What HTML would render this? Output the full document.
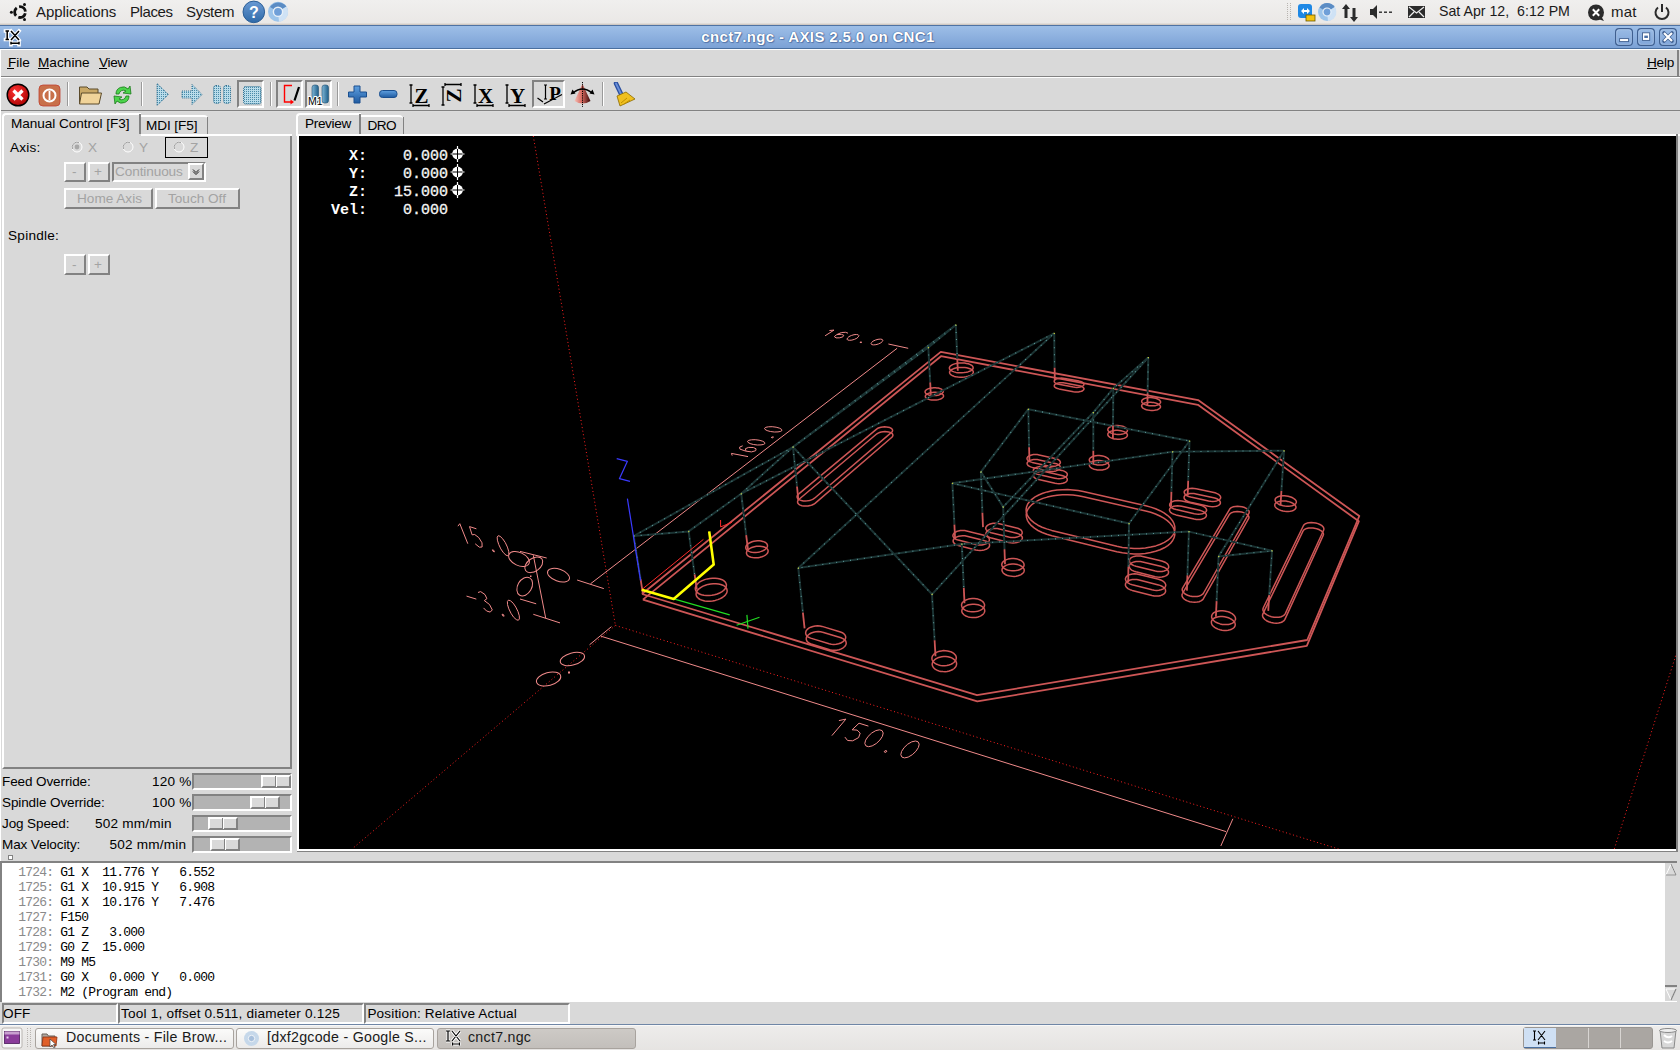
<!DOCTYPE html>
<html><head><meta charset="utf-8"><style>
html,body{margin:0;padding:0;width:1680px;height:1050px;overflow:hidden;background:#d9d9d9;position:relative}
body{font-family:"Liberation Sans", sans-serif}
</style></head><body>
<div style="position:absolute;left:0px;top:0px;width:1680px;height:24px;background:linear-gradient(#f0efee,#eae8e6)"></div>
<div style="position:absolute;left:0px;top:23px;width:1680px;height:1px;background:#e0dcd8"></div>
<div style="position:absolute;left:0px;top:24px;width:1680px;height:1px;background:#cfc9c3"></div>
<svg style="position:absolute;left:4px;top:0px;" width="30" height="24" viewBox="0 0 30 24"><circle cx="16" cy="12.1" r="5.4" fill="none" stroke="#111" stroke-width="2.8" stroke-dasharray="8.8 2.5" stroke-dashoffset="10.05"/>
<circle cx="7.4" cy="12.3" r="1.5" fill="#111"/><circle cx="20.5" cy="4.4" r="1.5" fill="#111"/><circle cx="20.5" cy="19.6" r="1.5" fill="#111"/></svg>
<div style="left:36px;position:absolute;top:3.80px;font-family:'Liberation Sans', sans-serif;font-size:15px;line-height:15px;color:#1a1a1a;font-weight:400;white-space:pre;letter-spacing:-0.05px;">Applications</div>
<div style="left:130px;position:absolute;top:3.80px;font-family:'Liberation Sans', sans-serif;font-size:15px;line-height:15px;color:#1a1a1a;font-weight:400;white-space:pre;letter-spacing:-0.4px;">Places</div>
<div style="left:186px;position:absolute;top:3.80px;font-family:'Liberation Sans', sans-serif;font-size:15px;line-height:15px;color:#1a1a1a;font-weight:400;white-space:pre;letter-spacing:-0.3px;">System</div>
<svg style="position:absolute;left:242px;top:0px;" width="24" height="24" viewBox="0 0 24 24"><defs><linearGradient id="hg" x1="0" y1="0" x2="0" y2="1"><stop offset="0" stop-color="#6a9ad4"/><stop offset="1" stop-color="#2f6aa8"/></linearGradient></defs>
<circle cx="11.8" cy="11.9" r="10.8" fill="url(#hg)" stroke="#2d5f96" stroke-width="1"/>
<text x="11.8" y="18" text-anchor="middle" font-family="Liberation Sans" font-weight="bold" font-size="16" fill="#fff">?</text></svg>
<svg style="position:absolute;left:267px;top:1px;" width="22" height="22" viewBox="0 0 22 22"><circle cx="11" cy="10.8" r="10" fill="#9cc4ea"/>
<path d="M11 10.8 L3 6 A10 10 0 0 1 19.5 5.5 Z" fill="#5b8cc4"/>
<path d="M11 10.8 L19.5 5.5 A10 10 0 0 1 12 20.8 Z" fill="#cfe2f5"/>
<circle cx="11" cy="10.8" r="4.6" fill="#6f9fd8" stroke="#e8f0f8" stroke-width="1.4"/></svg>
<svg style="position:absolute;left:1286px;top:3px;" width="6" height="18" viewBox="0 0 6 18"><rect x="1" y="0" width="1" height="1" fill="#b8b4b0"/><rect x="1" y="2" width="1" height="1" fill="#b8b4b0"/><rect x="1" y="4" width="1" height="1" fill="#b8b4b0"/><rect x="1" y="6" width="1" height="1" fill="#b8b4b0"/><rect x="1" y="8" width="1" height="1" fill="#b8b4b0"/><rect x="1" y="10" width="1" height="1" fill="#b8b4b0"/><rect x="1" y="12" width="1" height="1" fill="#b8b4b0"/><rect x="1" y="14" width="1" height="1" fill="#b8b4b0"/><rect x="1" y="16" width="1" height="1" fill="#b8b4b0"/><rect x="4" y="0" width="1" height="1" fill="#b8b4b0"/><rect x="4" y="2" width="1" height="1" fill="#b8b4b0"/><rect x="4" y="4" width="1" height="1" fill="#b8b4b0"/><rect x="4" y="6" width="1" height="1" fill="#b8b4b0"/><rect x="4" y="8" width="1" height="1" fill="#b8b4b0"/><rect x="4" y="10" width="1" height="1" fill="#b8b4b0"/><rect x="4" y="12" width="1" height="1" fill="#b8b4b0"/><rect x="4" y="14" width="1" height="1" fill="#b8b4b0"/><rect x="4" y="16" width="1" height="1" fill="#b8b4b0"/></svg>
<svg style="position:absolute;left:1297px;top:2px;" width="20" height="20" viewBox="0 0 20 20"><rect x="1" y="2" width="14" height="14" rx="3" fill="#1e88e5"/>
<path d="M4 9 L7 6 L7 8 L10 8 L10 6 L13 9 L10 12 L10 10 L7 10 L7 12 Z" fill="#fff"/>
<rect x="9" y="13" width="9" height="6" fill="#f4c20d" stroke="#6b5a00" stroke-width="0.8"/></svg>
<svg style="position:absolute;left:1317px;top:2px;" width="20" height="20" viewBox="0 0 20 20"><circle cx="10" cy="10" r="9" fill="#9cc4ea"/>
<path d="M10 10 L2.5 5.5 A9 9 0 0 1 17.8 5 Z" fill="#5b8cc4"/>
<path d="M10 10 L17.8 5 A9 9 0 0 1 11 19 Z" fill="#cfe2f5"/>
<circle cx="10" cy="10" r="4" fill="#6f9fd8" stroke="#e8f0f8" stroke-width="1.2"/></svg>
<svg style="position:absolute;left:1341px;top:3px;" width="20" height="20" viewBox="0 0 20 20"><path d="M5 1 L1 6 L3.5 6 L3.5 15 L6.5 15 L6.5 6 L9 6 Z" fill="#2b2b2b"/>
<path d="M13 19 L9 14 L11.5 14 L11.5 5 L14.5 5 L14.5 14 L17 14 Z" fill="#2b2b2b"/></svg>
<svg style="position:absolute;left:1369px;top:3px;" width="26" height="18" viewBox="0 0 26 18"><path d="M1 6 L4 6 L8 2 L8 16 L4 12 L1 12 Z" fill="#2b2b2b"/>
<rect x="10" y="8.5" width="3" height="1.4" fill="#2b2b2b"/><rect x="15" y="8.5" width="3" height="1.4" fill="#2b2b2b"/><rect x="20" y="8.5" width="3" height="1.4" fill="#2b2b2b"/></svg>
<svg style="position:absolute;left:1407px;top:4px;" width="20" height="16" viewBox="0 0 20 16"><rect x="1" y="2" width="17" height="12" fill="#2b2b2b"/>
<path d="M2 3 L9.5 9 L17 3 M2 13 L7 8 M17 13 L12 8" stroke="#eee" stroke-width="1.2" fill="none"/></svg>
<div style="left:1439px;position:absolute;top:4.48px;font-family:'Liberation Sans', sans-serif;font-size:14.2px;line-height:14.2px;color:#1a1a1a;font-weight:400;white-space:pre;letter-spacing:0.0px;">Sat Apr 12,  6:12 PM</div>
<svg style="position:absolute;left:1587px;top:3px;" width="20" height="20" viewBox="0 0 20 20"><circle cx="9" cy="9.5" r="8" fill="#2b2b2b"/><path d="M11 16 L17 18 L14 13 Z" fill="#2b2b2b"/>
<path d="M5.8 6.3 L12.2 12.7 M12.2 6.3 L5.8 12.7" stroke="#fff" stroke-width="2"/></svg>
<div style="left:1611px;position:absolute;top:3.80px;font-family:'Liberation Sans', sans-serif;font-size:15px;line-height:15px;color:#1a1a1a;font-weight:400;white-space:pre;letter-spacing:0.2px;">mat</div>
<svg style="position:absolute;left:1653px;top:3px;" width="18" height="18" viewBox="0 0 18 18"><path d="M5 4.5 A6.5 6.5 0 1 0 13 4.5" fill="none" stroke="#2b2b2b" stroke-width="2"/><rect x="8" y="1" width="2" height="8" fill="#2b2b2b"/></svg>
<div style="position:absolute;left:0px;top:25px;width:1680px;height:24px;background:linear-gradient(#9fc0e8,#7aa0d5)"></div>
<div style="position:absolute;left:0px;top:25px;width:1680px;height:1px;background:#4f73a3"></div>
<div style="position:absolute;left:0px;top:48px;width:1680px;height:1px;background:#4a6f9f"></div>
<svg style="position:absolute;left:3px;top:28px;" width="20" height="19" viewBox="0 0 20 19"><g stroke="#fff" stroke-width="3.6" fill="none" stroke-linecap="square"><path d="M2.5 3 H6 M4.2 3 V11.5 M2.5 11.5 H6 M8 3 L16 12 M16 3 L8 12 M8.5 15.2 H15.5 M8 13.8 V16.6 M16 13.8 V16.6"/></g>
<g stroke="#000" stroke-width="1.5" fill="none"><path d="M2.5 3 H6 M4.2 3 V11.5 M2.5 11.5 H6 M8 3 L16 12 M16 3 L8 12 M8.5 15.2 H15.5 M8 13.8 V16.6 M16 13.8 V16.6"/></g></svg>
<div style="left:318px;width:1000px;text-align:center;position:absolute;top:28.80px;font-family:'Liberation Sans', sans-serif;font-size:15px;line-height:15px;color:#fff;font-weight:700;white-space:pre;letter-spacing:0.35px;text-shadow:0 0 1px #3e5f92,0 0 1px #3e5f92,1px 1px 1px #5a7bb0">cnct7.ngc - AXIS 2.5.0 on CNC1</div>
<svg style="position:absolute;left:1615px;top:28px;" width="18" height="18" viewBox="0 0 18 18"><rect x="0.6" y="0.6" width="16.8" height="16.8" rx="3.5" fill="none" stroke="#3f5f90" stroke-width="1.2"/><rect x="1.7" y="1.7" width="14.6" height="14.6" rx="2.6" fill="none" stroke="#b6cdeb" stroke-opacity="0.55"/><rect x="4.6" y="10.6" width="9" height="3" fill="#fff" stroke="#3f5f90" stroke-width="0.9"/></svg>
<svg style="position:absolute;left:1637px;top:28px;" width="18" height="18" viewBox="0 0 18 18"><rect x="0.6" y="0.6" width="16.8" height="16.8" rx="3.5" fill="none" stroke="#3f5f90" stroke-width="1.2"/><rect x="1.7" y="1.7" width="14.6" height="14.6" rx="2.6" fill="none" stroke="#b6cdeb" stroke-opacity="0.55"/><rect x="5.5" y="4.8" width="7.2" height="7.6" fill="#fff" stroke="#3f5f90" stroke-width="0.9"/><rect x="7.3" y="7.6" width="3.6" height="2.4" fill="#4a6fa5"/></svg>
<svg style="position:absolute;left:1659px;top:28px;" width="18" height="18" viewBox="0 0 18 18"><rect x="0.6" y="0.6" width="16.8" height="16.8" rx="3.5" fill="none" stroke="#3f5f90" stroke-width="1.2"/><rect x="1.7" y="1.7" width="14.6" height="14.6" rx="2.6" fill="none" stroke="#b6cdeb" stroke-opacity="0.55"/><path d="M5 5 L13 13 M13 5 L5 13" stroke="#3f5f90" stroke-width="3.6" stroke-linecap="round"/><path d="M5 5 L13 13 M13 5 L5 13" stroke="#fff" stroke-width="2.2"/></svg>
<div style="position:absolute;left:0px;top:49px;width:1680px;height:1px;background:#fff"></div>
<div style="position:absolute;left:0px;top:49px;width:1px;height:976px;background:#fff"></div>
<div style="position:absolute;left:1px;top:50px;width:1679px;height:26px;background:#d9d9d9"></div>
<div style="position:absolute;left:1px;top:76px;width:1679px;height:1px;background:#828282"></div>
<div style="position:absolute;left:1px;top:77px;width:1679px;height:1px;background:#fff"></div>
<div style="position:absolute;left:1677px;top:50px;width:2px;height:27px;background:#828282"></div>
<div style="left:8px;position:absolute;top:56.49px;font-family:'Liberation Sans', sans-serif;font-size:13.6px;line-height:13.6px;color:#000;font-weight:400;white-space:pre;letter-spacing:0px;">File</div>
<div style="left:38px;position:absolute;top:56.49px;font-family:'Liberation Sans', sans-serif;font-size:13.6px;line-height:13.6px;color:#000;font-weight:400;white-space:pre;letter-spacing:0.05px;">Machine</div>
<div style="left:99px;position:absolute;top:56.49px;font-family:'Liberation Sans', sans-serif;font-size:13.6px;line-height:13.6px;color:#000;font-weight:400;white-space:pre;letter-spacing:-0.3px;">View</div>
<div style="left:1647px;position:absolute;top:56.49px;font-family:'Liberation Sans', sans-serif;font-size:13.6px;line-height:13.6px;color:#000;font-weight:400;white-space:pre;letter-spacing:-0.2px;">Help</div>
<div style="position:absolute;left:7px;top:68px;width:7px;height:1px;background:#000"></div>
<div style="position:absolute;left:38px;top:68px;width:11px;height:1px;background:#000"></div>
<div style="position:absolute;left:99px;top:68px;width:8px;height:1px;background:#000"></div>
<div style="position:absolute;left:1647px;top:68px;width:10px;height:1px;background:#000"></div>
<div style="position:absolute;left:1px;top:110px;width:1679px;height:1px;background:#828282"></div>
<div style="position:absolute;left:1px;top:111px;width:1679px;height:1px;background:#dcdcdc"></div>
<div style="position:absolute;left:67px;top:82px;width:1px;height:24px;background:#9a9a9a"></div>
<div style="position:absolute;left:68px;top:82px;width:1px;height:24px;background:#fff"></div>
<div style="position:absolute;left:141px;top:82px;width:1px;height:24px;background:#9a9a9a"></div>
<div style="position:absolute;left:142px;top:82px;width:1px;height:24px;background:#fff"></div>
<div style="position:absolute;left:270px;top:82px;width:1px;height:24px;background:#9a9a9a"></div>
<div style="position:absolute;left:271px;top:82px;width:1px;height:24px;background:#fff"></div>
<div style="position:absolute;left:337px;top:82px;width:1px;height:24px;background:#9a9a9a"></div>
<div style="position:absolute;left:338px;top:82px;width:1px;height:24px;background:#fff"></div>
<div style="position:absolute;left:602px;top:82px;width:1px;height:24px;background:#9a9a9a"></div>
<div style="position:absolute;left:603px;top:82px;width:1px;height:24px;background:#fff"></div>
<div style="position:absolute;left:237px;top:80px;width:27px;height:28px;background:#d9d9d9;box-sizing:border-box;border-top:2px solid #828282;border-left:2px solid #828282;border-bottom:2px solid #fff;border-right:2px solid #fff"></div>
<div style="position:absolute;left:276px;top:80px;width:27px;height:28px;background:#d9d9d9;box-sizing:border-box;border-top:2px solid #828282;border-left:2px solid #828282;border-bottom:2px solid #fff;border-right:2px solid #fff"></div>
<div style="position:absolute;left:305px;top:80px;width:27px;height:28px;background:#d9d9d9;box-sizing:border-box;border-top:2px solid #828282;border-left:2px solid #828282;border-bottom:2px solid #fff;border-right:2px solid #fff"></div>
<div style="position:absolute;left:532px;top:80px;width:33px;height:28px;background:#d9d9d9;box-sizing:border-box;border-top:2px solid #828282;border-left:2px solid #828282;border-bottom:2px solid #fff;border-right:2px solid #fff"></div>
<svg style="position:absolute;left:6px;top:83px;" width="25" height="25" viewBox="0 0 25 25"><defs><radialGradient id="ab" cx="0.4" cy="0.35" r="0.7"><stop offset="0" stop-color="#f33"/><stop offset="1" stop-color="#a00"/></radialGradient></defs>
<circle cx="12" cy="12" r="10.8" fill="url(#ab)" stroke="#000" stroke-width="1.4"/>
<path d="M7.5 7.5 L16.5 16.5 M16.5 7.5 L7.5 16.5" stroke="#fff" stroke-width="3.2"/></svg>
<svg style="position:absolute;left:38px;top:84px;" width="24" height="23" viewBox="0 0 24 23"><rect x="1" y="1" width="21" height="21" rx="4" fill="#c8704a" stroke="#c04030" stroke-width="0.8"/>
<circle cx="11.5" cy="11.5" r="6" fill="none" stroke="#fff" stroke-width="2"/><rect x="10.6" y="7" width="1.8" height="9" fill="#fff"/></svg>
<svg style="position:absolute;left:78px;top:84px;" width="25" height="22" viewBox="0 0 25 22"><path d="M1.5 3 L9 3 L11 5 L20 5 L20 19 L1.5 19 Z" fill="#c9a866" stroke="#5a4a2a" stroke-width="1"/>
<path d="M3.5 9 L23.5 9 L21 20 L1.5 20 Z" fill="#f1d49a" stroke="#5a4a2a" stroke-width="1"/></svg>
<svg style="position:absolute;left:111px;top:83px;" width="23" height="24" viewBox="0 0 23 24"><path d="M5 11 A7 7 0 0 1 17 6 L19 3 L20 11 L12 10 L15 8 A4.5 4.5 0 0 0 8 11 Z" fill="#4cd44c" stroke="#1a7a1a" stroke-width="0.8"/>
<path d="M18 13 A7 7 0 0 1 6 18 L4 21 L3 13 L11 14 L8 16 A4.5 4.5 0 0 0 15 13 Z" fill="#4cd44c" stroke="#1a7a1a" stroke-width="0.8"/></svg>
<svg style="position:absolute;left:155px;top:82px;" width="16" height="25" viewBox="0 0 16 25"><defs><pattern id="dp" width="2" height="2" patternUnits="userSpaceOnUse"><rect width="2" height="2" fill="#b9dcea"/><rect width="1" height="1" fill="#4a8aa8"/></pattern></defs><path d="M2 1.5 L13.5 12.5 L2 23.5 Z" fill="url(#dp)" stroke="#2f6f90" stroke-width="1" stroke-dasharray="1 1"/></svg>
<svg style="position:absolute;left:180px;top:82px;" width="25" height="25" viewBox="0 0 25 25"><defs><pattern id="dp2" width="2" height="2" patternUnits="userSpaceOnUse"><rect width="2" height="2" fill="#b9dcea"/><rect width="1" height="1" fill="#4a8aa8"/></pattern></defs><path d="M2 9 L12 9 L12 2.5 L22 12.5 L12 22.5 L12 16 L2 16 Z" fill="url(#dp2)" stroke="#2f6f90" stroke-width="1" stroke-dasharray="1 1"/></svg>
<svg style="position:absolute;left:212px;top:84px;" width="21" height="21" viewBox="0 0 21 21"><defs><pattern id="dp3" width="2" height="2" patternUnits="userSpaceOnUse"><rect width="2" height="2" fill="#b9dcea"/><rect width="1" height="1" fill="#4a8aa8"/></pattern></defs><rect x="1.5" y="1.5" width="7" height="18" rx="2.5" fill="url(#dp3)" stroke="#2f6f90" stroke-dasharray="1 1"/><rect x="11.5" y="1.5" width="7" height="18" rx="2.5" fill="url(#dp3)" stroke="#2f6f90" stroke-dasharray="1 1"/></svg>
<svg style="position:absolute;left:242px;top:85px;" width="21" height="21" viewBox="0 0 21 21"><defs><pattern id="dp4" width="2" height="2" patternUnits="userSpaceOnUse"><rect width="2" height="2" fill="#b9dcea"/><rect width="1" height="1" fill="#4a8aa8"/></pattern></defs><rect x="1.5" y="1.5" width="17.5" height="17.5" rx="2" fill="url(#dp4)" stroke="#2f6f90" stroke-dasharray="1 1"/></svg>
<svg style="position:absolute;left:282px;top:84px;" width="20" height="22" viewBox="0 0 20 22"><path d="M10 1.5 L2.5 1.5 L2.5 18 L9 18" stroke="#f00" stroke-width="1.4" fill="none"/><path d="M8.5 15.5 L12 18 L8.5 20.5 Z" fill="#f00"/><path d="M17 3 L12.5 16.5" stroke="#000" stroke-width="2.2"/></svg>
<svg style="position:absolute;left:307px;top:84px;" width="24" height="22" viewBox="0 0 24 22"><defs><linearGradient id="mb" x1="0" x2="1"><stop offset="0" stop-color="#7fb6d6"/><stop offset="1" stop-color="#1f5f8a"/></linearGradient></defs>
<rect x="5" y="1" width="6.5" height="18" rx="2.5" fill="url(#mb)" stroke="#1f4f70" stroke-width="0.6"/><rect x="15" y="1" width="6.5" height="18" rx="2.5" fill="url(#mb)" stroke="#1f4f70" stroke-width="0.6"/>
<text x="1" y="21" font-family="Liberation Sans" font-size="10.5" fill="#000" stroke="#fff" stroke-width="2" paint-order="stroke">M1</text></svg>
<svg style="position:absolute;left:347px;top:85px;" width="22" height="19" viewBox="0 0 22 19"><defs><linearGradient id="pg" x1="0" y1="0" x2="0" y2="1"><stop offset="0" stop-color="#5fa0e0"/><stop offset="1" stop-color="#1f5aa0"/></linearGradient></defs>
<path d="M7 1 H13 V7 H19.5 V12 H13 V18 H7 V12 H1.5 V7 H7 Z" fill="url(#pg)" stroke="#1a4f8f" stroke-width="1" stroke-linejoin="round"/></svg>
<svg style="position:absolute;left:378px;top:89px;" width="21" height="11" viewBox="0 0 21 11"><rect x="1.5" y="1.5" width="17.5" height="7" rx="3" fill="url(#pg)" stroke="#1a4f8f" stroke-width="1"/></svg>
<svg style="position:absolute;left:408px;top:83px;" width="26" height="25" viewBox="0 0 26 25"><g stroke="#000" stroke-width="1.3" fill="none"><path d="M3 2 V20 M1.5 2 H4.5 M1.5 20 H4.5 M5 22.5 H21 M5 21 V24 M21 21 V24"/></g><text x="13.5" y="19.5" text-anchor="middle" font-family="Liberation Serif" font-weight="bold" font-size="21" fill="#000">Z</text></svg>
<svg style="position:absolute;left:440px;top:83px;" width="26" height="25" viewBox="0 0 26 25"><g stroke="#000" stroke-width="1.3" fill="none"><path d="M3 4 V22 M1.5 4 H4.5 M1.5 22 H4.5 M5 1.5 H21 M5 0 V3 M21 0 V3"/></g><text x="13.5" y="19.5" text-anchor="middle" font-family="Liberation Serif" font-weight="bold" font-size="21" fill="#000" transform="rotate(-90 13.5 12.5)">Z</text></svg>
<svg style="position:absolute;left:472px;top:83px;" width="26" height="25" viewBox="0 0 26 25"><g stroke="#000" stroke-width="1.3" fill="none"><path d="M3 2 V20 M1.5 2 H4.5 M1.5 20 H4.5 M5 22.5 H21 M5 21 V24 M21 21 V24"/></g><text x="13.5" y="19.5" text-anchor="middle" font-family="Liberation Serif" font-weight="bold" font-size="21" fill="#000">X</text></svg>
<svg style="position:absolute;left:504px;top:83px;" width="26" height="25" viewBox="0 0 26 25"><g stroke="#000" stroke-width="1.3" fill="none"><path d="M3 2 V20 M1.5 2 H4.5 M1.5 20 H4.5 M5 22.5 H21 M5 21 V24 M21 21 V24"/></g><text x="13.5" y="19.5" text-anchor="middle" font-family="Liberation Serif" font-weight="bold" font-size="21" fill="#000">Y</text></svg>
<svg style="position:absolute;left:536px;top:83px;" width="28" height="25" viewBox="0 0 28 25"><g stroke="#000" stroke-width="1.2" fill="none"><path d="M9.5 2 V16 M8 2 H11 M8 16 H11 M1.5 15 L7 19 M8 21 L26 11.5"/></g>
<text x="19" y="16.5" text-anchor="middle" font-family="Liberation Serif" font-weight="bold" font-size="19" fill="#000">P</text></svg>
<svg style="position:absolute;left:570px;top:81px;" width="26" height="27" viewBox="0 0 26 27"><defs><linearGradient id="cg" x1="0" x2="1"><stop offset="0" stop-color="#f4c0b8"/><stop offset="0.45" stop-color="#d86a60"/><stop offset="1" stop-color="#3a0808"/></linearGradient></defs>
<path d="M12.5 3 L4.5 20 Q12.5 25 20.5 20 Z" fill="url(#cg)"/>
<path d="M12.5 1 V26" stroke="#000" stroke-width="1" stroke-dasharray="1.2 1"/>
<path d="M3 12 Q12.5 4 22 12" stroke="#000" stroke-width="1.3" fill="none"/><path d="M0.5 13.5 L2.5 8.5 L5.5 12.5 Z M24.5 13.5 L22.5 8.5 L19.5 12.5 Z" fill="#000"/></svg>
<svg style="position:absolute;left:613px;top:82px;" width="24" height="26" viewBox="0 0 24 26"><path d="M3 1.5 L9 14" stroke="#2a4fa0" stroke-width="4.5" stroke-linecap="round"/><path d="M3 1.5 L9 14" stroke="#6a8fd8" stroke-width="1.8" stroke-linecap="round"/>
<path d="M4 14 L13 10 L22 17 L7 24 Z" fill="#f0c020" stroke="#8a6a00" stroke-width="0.8"/><path d="M8 21 L14 16 M11 22 L17 18" stroke="#c09000" stroke-width="1"/></svg>
<div style="position:absolute;left:1px;top:112px;width:1679px;height:1000px;background:#d9d9d9;z-index:-1"></div>
<div style="position:absolute;left:2px;top:113px;width:139px;height:22px;background:#d9d9d9;border-top:2px solid #fff;border-left:2px solid #fff;border-top-left-radius:4px;box-sizing:border-box"></div>
<div style="position:absolute;left:139px;top:114px;width:2px;height:20px;background:#828282"></div>
<div style="left:11px;position:absolute;top:117.49px;font-family:'Liberation Sans', sans-serif;font-size:13.6px;line-height:13.6px;color:#000;font-weight:400;white-space:pre;letter-spacing:-0.05px;">Manual Control [F3]</div>
<div style="position:absolute;left:141px;top:115px;width:67px;height:19px;background:#d9d9d9;border-top:2px solid #fff;border-top-right-radius:4px;box-sizing:border-box"></div>
<div style="position:absolute;left:207px;top:117px;width:1.3px;height:17px;background:#828282"></div>
<div style="left:146px;position:absolute;top:119.49px;font-family:'Liberation Sans', sans-serif;font-size:13.6px;line-height:13.6px;color:#000;font-weight:400;white-space:pre;letter-spacing:-0.1px;">MDI [F5]</div>
<div style="position:absolute;left:2px;top:134px;width:290px;height:635px;box-sizing:border-box;border-left:2px solid #fff;border-bottom:2px solid #828282;border-right:2px solid #828282"></div>
<div style="position:absolute;left:141px;top:134px;width:151px;height:2px;background:#fff"></div>
<div style="position:absolute;left:296px;top:113px;width:65px;height:22px;background:#d9d9d9;border-top:2px solid #fff;border-left:2px solid #fff;border-top-left-radius:4px;box-sizing:border-box"></div>
<div style="position:absolute;left:359px;top:114px;width:2px;height:20px;background:#828282"></div>
<div style="left:305px;position:absolute;top:117.09px;font-family:'Liberation Sans', sans-serif;font-size:13.6px;line-height:13.6px;color:#000;font-weight:400;white-space:pre;letter-spacing:-0.35px;">Preview</div>
<div style="position:absolute;left:361px;top:115px;width:42px;height:19px;background:#d9d9d9;border-top:2px solid #fff;border-top-right-radius:4px;box-sizing:border-box"></div>
<div style="position:absolute;left:402.5px;top:117px;width:1.3px;height:17px;background:#828282"></div>
<div style="left:367.5px;position:absolute;top:119.29px;font-family:'Liberation Sans', sans-serif;font-size:13.6px;line-height:13.6px;color:#000;font-weight:400;white-space:pre;letter-spacing:-0.6px;">DRO</div>
<div style="position:absolute;left:296px;top:134px;width:1384px;height:2px;background:#fff"></div>
<div style="position:absolute;left:361px;top:134px;width:1319px;height:2px;background:#fff"></div>
<div style="position:absolute;left:297px;top:134px;width:2px;height:717px;background:#fff"></div>
<div style="position:absolute;left:297px;top:849px;width:1381px;height:2px;background:#fff"></div>
<div style="position:absolute;left:297px;top:851px;width:1381px;height:1px;background:#828282"></div>
<div style="position:absolute;left:1676px;top:134px;width:2px;height:718px;background:#828282"></div>
<div style="position:absolute;left:299px;top:136px;width:1377px;height:713px;background:#000"></div>
<div style="left:10px;position:absolute;top:141.49px;font-family:'Liberation Sans', sans-serif;font-size:13.6px;line-height:13.6px;color:#000;font-weight:400;white-space:pre;letter-spacing:0.2px;">Axis:</div>
<svg style="position:absolute;left:71px;top:141px;" width="12" height="12" viewBox="0 0 12 12"><circle cx="6" cy="6" r="5" fill="none" stroke="#fff" stroke-width="1"/><path d="M1.5 8 A5 5 0 0 1 8 1.5" stroke="#a0a0a0" stroke-width="1" fill="none"/><circle cx="6" cy="6" r="2.4" fill="#a8a8a8"/></svg>
<div style="left:88px;position:absolute;top:140.99px;font-family:'Liberation Sans', sans-serif;font-size:13.6px;line-height:13.6px;color:#a3a3a3;font-weight:400;white-space:pre;letter-spacing:0px;">X</div>
<svg style="position:absolute;left:122px;top:141px;" width="12" height="12" viewBox="0 0 12 12"><circle cx="6" cy="6" r="5" fill="none" stroke="#fff" stroke-width="1"/><path d="M1.5 8 A5 5 0 0 1 8 1.5" stroke="#a0a0a0" stroke-width="1" fill="none"/></svg>
<div style="left:139px;position:absolute;top:140.99px;font-family:'Liberation Sans', sans-serif;font-size:13.6px;line-height:13.6px;color:#a3a3a3;font-weight:400;white-space:pre;letter-spacing:0px;">Y</div>
<div style="position:absolute;left:165px;top:137px;width:43px;height:21px;box-sizing:border-box;border:1px solid #000"></div>
<svg style="position:absolute;left:173px;top:141px;" width="12" height="12" viewBox="0 0 12 12"><circle cx="6" cy="6" r="5" fill="none" stroke="#fff" stroke-width="1"/><path d="M1.5 8 A5 5 0 0 1 8 1.5" stroke="#a0a0a0" stroke-width="1" fill="none"/></svg>
<div style="left:190px;position:absolute;top:140.99px;font-family:'Liberation Sans', sans-serif;font-size:13.6px;line-height:13.6px;color:#a3a3a3;font-weight:400;white-space:pre;letter-spacing:0px;">Z</div>
<div style="position:absolute;left:64px;top:162px;width:22px;height:20px;background:#d9d9d9;box-sizing:border-box;border-top:2px solid #fff;border-left:2px solid #fff;border-bottom:2px solid #828282;border-right:2px solid #828282"></div>
<div style="left:72px;position:absolute;top:165.49px;font-family:'Liberation Sans', sans-serif;font-size:13.6px;line-height:13.6px;color:#a3a3a3;font-weight:400;white-space:pre;letter-spacing:0px;">-</div>
<div style="position:absolute;left:88px;top:162px;width:22px;height:20px;background:#d9d9d9;box-sizing:border-box;border-top:2px solid #fff;border-left:2px solid #fff;border-bottom:2px solid #828282;border-right:2px solid #828282"></div>
<div style="left:94px;position:absolute;top:165.49px;font-family:'Liberation Sans', sans-serif;font-size:13.6px;line-height:13.6px;color:#a3a3a3;font-weight:400;white-space:pre;letter-spacing:0px;">+</div>
<div style="position:absolute;left:112px;top:162px;width:94px;height:20px;background:#d9d9d9;box-sizing:border-box;border-top:2px solid #828282;border-left:2px solid #828282;border-bottom:2px solid #fff;border-right:2px solid #fff"></div>
<div style="left:115px;position:absolute;top:165.49px;font-family:'Liberation Sans', sans-serif;font-size:13.6px;line-height:13.6px;color:#a3a3a3;font-weight:400;white-space:pre;letter-spacing:-0.1px;">Continuous</div>
<div style="position:absolute;left:188px;top:163px;width:16px;height:17px;background:#d9d9d9;box-sizing:border-box;border-top:2px solid #fff;border-left:2px solid #fff;border-bottom:2px solid #828282;border-right:2px solid #828282"></div>
<svg style="position:absolute;left:191px;top:168px;" width="10" height="8" viewBox="0 0 10 8"><path d="M2 1.5 L5 4.5 L8 1.5 M2 3.5 L5 6.5 L8 3.5" stroke="#000" stroke-width="0.9" fill="none"/></svg>
<div style="position:absolute;left:64px;top:188px;width:89px;height:21px;background:#d9d9d9;box-sizing:border-box;border-top:2px solid #fff;border-left:2px solid #fff;border-bottom:2px solid #828282;border-right:2px solid #828282"></div>
<div style="left:77px;position:absolute;top:192.49px;font-family:'Liberation Sans', sans-serif;font-size:13.6px;line-height:13.6px;color:#a3a3a3;font-weight:400;white-space:pre;letter-spacing:0px;">Home Axis</div>
<div style="position:absolute;left:155px;top:188px;width:85px;height:21px;background:#d9d9d9;box-sizing:border-box;border-top:2px solid #fff;border-left:2px solid #fff;border-bottom:2px solid #828282;border-right:2px solid #828282"></div>
<div style="left:168px;position:absolute;top:192.49px;font-family:'Liberation Sans', sans-serif;font-size:13.6px;line-height:13.6px;color:#a3a3a3;font-weight:400;white-space:pre;letter-spacing:0px;">Touch Off</div>
<div style="left:8px;position:absolute;top:228.99px;font-family:'Liberation Sans', sans-serif;font-size:13.6px;line-height:13.6px;color:#000;font-weight:400;white-space:pre;letter-spacing:0.25px;">Spindle:</div>
<div style="position:absolute;left:64px;top:254px;width:22px;height:21px;background:#d9d9d9;box-sizing:border-box;border-top:2px solid #fff;border-left:2px solid #fff;border-bottom:2px solid #828282;border-right:2px solid #828282"></div>
<div style="left:72px;position:absolute;top:258.49px;font-family:'Liberation Sans', sans-serif;font-size:13.6px;line-height:13.6px;color:#a3a3a3;font-weight:400;white-space:pre;letter-spacing:0px;">-</div>
<div style="position:absolute;left:88px;top:254px;width:22px;height:21px;background:#d9d9d9;box-sizing:border-box;border-top:2px solid #fff;border-left:2px solid #fff;border-bottom:2px solid #828282;border-right:2px solid #828282"></div>
<div style="left:94px;position:absolute;top:258.49px;font-family:'Liberation Sans', sans-serif;font-size:13.6px;line-height:13.6px;color:#a3a3a3;font-weight:400;white-space:pre;letter-spacing:0px;">+</div>
<div style="left:2px;position:absolute;top:775.07px;font-family:'Liberation Sans', sans-serif;font-size:13.5px;line-height:13.5px;color:#000;font-weight:400;white-space:pre;letter-spacing:-0.1px;">Feed Override:</div>
<div style="left:152px;position:absolute;top:774.99px;font-family:'Liberation Sans', sans-serif;font-size:13.6px;line-height:13.6px;color:#000;font-weight:400;white-space:pre;letter-spacing:0.2px;">120 %</div>
<div style="position:absolute;left:192px;top:773px;width:100px;height:17px;background:#b3b3b3;box-sizing:border-box;border-top:2px solid #828282;border-left:2px solid #828282;border-bottom:2px solid #fff;border-right:2px solid #fff"></div>
<div style="position:absolute;left:261px;top:775px;width:30px;height:13px;background:#d9d9d9;box-sizing:border-box;border-top:2px solid #fff;border-left:2px solid #fff;border-bottom:2px solid #828282;border-right:2px solid #828282"></div>
<div style="position:absolute;left:275px;top:776px;width:1px;height:11px;background:#828282"></div>
<div style="position:absolute;left:276px;top:776px;width:1px;height:11px;background:#fff"></div>
<div style="left:2px;position:absolute;top:796.07px;font-family:'Liberation Sans', sans-serif;font-size:13.5px;line-height:13.5px;color:#000;font-weight:400;white-space:pre;letter-spacing:-0.1px;">Spindle Override:</div>
<div style="left:152px;position:absolute;top:795.99px;font-family:'Liberation Sans', sans-serif;font-size:13.6px;line-height:13.6px;color:#000;font-weight:400;white-space:pre;letter-spacing:0.2px;">100 %</div>
<div style="position:absolute;left:192px;top:794px;width:100px;height:17px;background:#b3b3b3;box-sizing:border-box;border-top:2px solid #828282;border-left:2px solid #828282;border-bottom:2px solid #fff;border-right:2px solid #fff"></div>
<div style="position:absolute;left:250px;top:796px;width:30px;height:13px;background:#d9d9d9;box-sizing:border-box;border-top:2px solid #fff;border-left:2px solid #fff;border-bottom:2px solid #828282;border-right:2px solid #828282"></div>
<div style="position:absolute;left:264px;top:797px;width:1px;height:11px;background:#828282"></div>
<div style="position:absolute;left:265px;top:797px;width:1px;height:11px;background:#fff"></div>
<div style="left:2px;position:absolute;top:817.07px;font-family:'Liberation Sans', sans-serif;font-size:13.5px;line-height:13.5px;color:#000;font-weight:400;white-space:pre;letter-spacing:-0.1px;">Jog Speed:</div>
<div style="left:95px;position:absolute;top:816.99px;font-family:'Liberation Sans', sans-serif;font-size:13.6px;line-height:13.6px;color:#000;font-weight:400;white-space:pre;letter-spacing:0.2px;">502 mm/min</div>
<div style="position:absolute;left:192px;top:815px;width:100px;height:17px;background:#b3b3b3;box-sizing:border-box;border-top:2px solid #828282;border-left:2px solid #828282;border-bottom:2px solid #fff;border-right:2px solid #fff"></div>
<div style="position:absolute;left:208px;top:817px;width:30px;height:13px;background:#d9d9d9;box-sizing:border-box;border-top:2px solid #fff;border-left:2px solid #fff;border-bottom:2px solid #828282;border-right:2px solid #828282"></div>
<div style="position:absolute;left:222px;top:818px;width:1px;height:11px;background:#828282"></div>
<div style="position:absolute;left:223px;top:818px;width:1px;height:11px;background:#fff"></div>
<div style="left:2px;position:absolute;top:838.07px;font-family:'Liberation Sans', sans-serif;font-size:13.5px;line-height:13.5px;color:#000;font-weight:400;white-space:pre;letter-spacing:-0.1px;">Max Velocity:</div>
<div style="left:109.5px;position:absolute;top:837.99px;font-family:'Liberation Sans', sans-serif;font-size:13.6px;line-height:13.6px;color:#000;font-weight:400;white-space:pre;letter-spacing:0.2px;">502 mm/min</div>
<div style="position:absolute;left:192px;top:836px;width:100px;height:17px;background:#b3b3b3;box-sizing:border-box;border-top:2px solid #828282;border-left:2px solid #828282;border-bottom:2px solid #fff;border-right:2px solid #fff"></div>
<div style="position:absolute;left:210px;top:838px;width:30px;height:13px;background:#d9d9d9;box-sizing:border-box;border-top:2px solid #fff;border-left:2px solid #fff;border-bottom:2px solid #828282;border-right:2px solid #828282"></div>
<div style="position:absolute;left:224px;top:839px;width:1px;height:11px;background:#828282"></div>
<div style="position:absolute;left:225px;top:839px;width:1px;height:11px;background:#fff"></div>
<div style="position:absolute;left:8px;top:855px;width:5px;height:5px;box-sizing:border-box;border:1px solid #828282;background:#fff"></div>
<div style="position:absolute;left:0px;top:861px;width:1680px;height:2px;background:#828282"></div>
<div style="position:absolute;left:0px;top:861px;width:2px;height:142px;background:#828282"></div>
<div style="position:absolute;left:2px;top:863px;width:1675px;height:139px;background:#fff"></div>
<div style="left:18.2px;position:absolute;top:866.04px;font-family:'Liberation Mono', monospace;font-size:13px;line-height:13px;color:#8a8a8a;font-weight:400;white-space:pre;letter-spacing:-0.8px;">1724:</div>
<div style="left:60.3px;position:absolute;top:866.04px;font-family:'Liberation Mono', monospace;font-size:13px;line-height:13px;color:#000;font-weight:400;white-space:pre;letter-spacing:-0.8px;">G1 X  11.776 Y   6.552</div>
<div style="left:18.2px;position:absolute;top:881.04px;font-family:'Liberation Mono', monospace;font-size:13px;line-height:13px;color:#8a8a8a;font-weight:400;white-space:pre;letter-spacing:-0.8px;">1725:</div>
<div style="left:60.3px;position:absolute;top:881.04px;font-family:'Liberation Mono', monospace;font-size:13px;line-height:13px;color:#000;font-weight:400;white-space:pre;letter-spacing:-0.8px;">G1 X  10.915 Y   6.908</div>
<div style="left:18.2px;position:absolute;top:896.04px;font-family:'Liberation Mono', monospace;font-size:13px;line-height:13px;color:#8a8a8a;font-weight:400;white-space:pre;letter-spacing:-0.8px;">1726:</div>
<div style="left:60.3px;position:absolute;top:896.04px;font-family:'Liberation Mono', monospace;font-size:13px;line-height:13px;color:#000;font-weight:400;white-space:pre;letter-spacing:-0.8px;">G1 X  10.176 Y   7.476</div>
<div style="left:18.2px;position:absolute;top:911.04px;font-family:'Liberation Mono', monospace;font-size:13px;line-height:13px;color:#8a8a8a;font-weight:400;white-space:pre;letter-spacing:-0.8px;">1727:</div>
<div style="left:60.3px;position:absolute;top:911.04px;font-family:'Liberation Mono', monospace;font-size:13px;line-height:13px;color:#000;font-weight:400;white-space:pre;letter-spacing:-0.8px;">F150</div>
<div style="left:18.2px;position:absolute;top:926.04px;font-family:'Liberation Mono', monospace;font-size:13px;line-height:13px;color:#8a8a8a;font-weight:400;white-space:pre;letter-spacing:-0.8px;">1728:</div>
<div style="left:60.3px;position:absolute;top:926.04px;font-family:'Liberation Mono', monospace;font-size:13px;line-height:13px;color:#000;font-weight:400;white-space:pre;letter-spacing:-0.8px;">G1 Z   3.000</div>
<div style="left:18.2px;position:absolute;top:941.04px;font-family:'Liberation Mono', monospace;font-size:13px;line-height:13px;color:#8a8a8a;font-weight:400;white-space:pre;letter-spacing:-0.8px;">1729:</div>
<div style="left:60.3px;position:absolute;top:941.04px;font-family:'Liberation Mono', monospace;font-size:13px;line-height:13px;color:#000;font-weight:400;white-space:pre;letter-spacing:-0.8px;">G0 Z  15.000</div>
<div style="left:18.2px;position:absolute;top:956.04px;font-family:'Liberation Mono', monospace;font-size:13px;line-height:13px;color:#8a8a8a;font-weight:400;white-space:pre;letter-spacing:-0.8px;">1730:</div>
<div style="left:60.3px;position:absolute;top:956.04px;font-family:'Liberation Mono', monospace;font-size:13px;line-height:13px;color:#000;font-weight:400;white-space:pre;letter-spacing:-0.8px;">M9 M5</div>
<div style="left:18.2px;position:absolute;top:971.04px;font-family:'Liberation Mono', monospace;font-size:13px;line-height:13px;color:#8a8a8a;font-weight:400;white-space:pre;letter-spacing:-0.8px;">1731:</div>
<div style="left:60.3px;position:absolute;top:971.04px;font-family:'Liberation Mono', monospace;font-size:13px;line-height:13px;color:#000;font-weight:400;white-space:pre;letter-spacing:-0.8px;">G0 X   0.000 Y   0.000</div>
<div style="left:18.2px;position:absolute;top:986.04px;font-family:'Liberation Mono', monospace;font-size:13px;line-height:13px;color:#8a8a8a;font-weight:400;white-space:pre;letter-spacing:-0.8px;">1732:</div>
<div style="left:60.3px;position:absolute;top:986.04px;font-family:'Liberation Mono', monospace;font-size:13px;line-height:13px;color:#000;font-weight:400;white-space:pre;letter-spacing:-0.8px;">M2 (Program end)</div>
<div style="position:absolute;left:1665px;top:863px;width:12px;height:138px;background:#d9d9d9"></div>
<svg style="position:absolute;left:1665px;top:863px;" width="12" height="14" viewBox="0 0 12 14"><path d="M6 1 L11 12 L1 12 Z" fill="#d9d9d9" stroke="#fff" stroke-width="1"/><path d="M1 12 L11 12 L6 1" stroke="#828282" stroke-width="1" fill="none"/></svg>
<svg style="position:absolute;left:1665px;top:985px;" width="12" height="16" viewBox="0 0 12 16"><rect x="0" y="0" width="12" height="2" fill="#828282"/><path d="M1 4 L11 4 L6 15 Z" fill="#d9d9d9" stroke="#fff" stroke-width="1"/><path d="M11 4 L6 15" stroke="#828282" stroke-width="1.2" fill="none"/></svg>
<div style="position:absolute;left:1677px;top:861px;width:3px;height:142px;background:#d9d9d9"></div>
<div style="position:absolute;left:0px;top:1002px;width:1680px;height:23px;background:#d9d9d9"></div>
<div style="position:absolute;left:2px;top:1003px;width:116px;height:21px;background:#d9d9d9;box-sizing:border-box;border-top:2px solid #828282;border-left:2px solid #828282;border-bottom:2px solid #fff;border-right:2px solid #fff"></div>
<div style="left:3px;position:absolute;top:1007.49px;font-family:'Liberation Sans', sans-serif;font-size:13.6px;line-height:13.6px;color:#000;font-weight:400;white-space:pre;letter-spacing:0.1px;">OFF</div>
<div style="position:absolute;left:118px;top:1003px;width:246px;height:21px;background:#d9d9d9;box-sizing:border-box;border-top:2px solid #828282;border-left:2px solid #828282;border-bottom:2px solid #fff;border-right:2px solid #fff"></div>
<div style="left:121px;position:absolute;top:1007.49px;font-family:'Liberation Sans', sans-serif;font-size:13.6px;line-height:13.6px;color:#000;font-weight:400;white-space:pre;letter-spacing:0.2px;">Tool 1, offset 0.511, diameter 0.125</div>
<div style="position:absolute;left:364px;top:1003px;width:206px;height:21px;background:#d9d9d9;box-sizing:border-box;border-top:2px solid #828282;border-left:2px solid #828282;border-bottom:2px solid #fff;border-right:2px solid #fff"></div>
<div style="left:367.4px;position:absolute;top:1007.49px;font-family:'Liberation Sans', sans-serif;font-size:13.6px;line-height:13.6px;color:#000;font-weight:400;white-space:pre;letter-spacing:0.15px;">Position: Relative Actual</div>
<div style="position:absolute;left:0px;top:1024px;width:1680px;height:26px;background:linear-gradient(#eeedec,#e6e4e2)"></div>
<div style="position:absolute;left:0px;top:1024px;width:1680px;height:1px;background:#6f86a6"></div>
<div style="position:absolute;left:0px;top:1025px;width:1680px;height:1px;background:#f8f8f8"></div>
<svg style="position:absolute;left:1px;top:1027px;" width="22" height="22" viewBox="0 0 22 22"><rect x="1" y="1" width="20" height="20" rx="2" fill="#f6f6f6" stroke="#b8b4b0"/>
<rect x="3.5" y="4.5" width="15" height="12" fill="#8a3c9a" stroke="#4a1a5a" stroke-width="0.8"/><rect x="3.5" y="4.5" width="15" height="3" fill="#c8a0d0"/><rect x="5.5" y="9.5" width="2" height="2" fill="#e8d0f0"/></svg>
<svg style="position:absolute;left:26px;top:1028px;" width="6" height="20" viewBox="0 0 6 20"><rect x="1" y="0" width="1" height="1" fill="#b8b4b0"/><rect x="1" y="2" width="1" height="1" fill="#b8b4b0"/><rect x="1" y="4" width="1" height="1" fill="#b8b4b0"/><rect x="1" y="6" width="1" height="1" fill="#b8b4b0"/><rect x="1" y="8" width="1" height="1" fill="#b8b4b0"/><rect x="1" y="10" width="1" height="1" fill="#b8b4b0"/><rect x="1" y="12" width="1" height="1" fill="#b8b4b0"/><rect x="1" y="14" width="1" height="1" fill="#b8b4b0"/><rect x="1" y="16" width="1" height="1" fill="#b8b4b0"/><rect x="1" y="18" width="1" height="1" fill="#b8b4b0"/><rect x="4" y="0" width="1" height="1" fill="#b8b4b0"/><rect x="4" y="2" width="1" height="1" fill="#b8b4b0"/><rect x="4" y="4" width="1" height="1" fill="#b8b4b0"/><rect x="4" y="6" width="1" height="1" fill="#b8b4b0"/><rect x="4" y="8" width="1" height="1" fill="#b8b4b0"/><rect x="4" y="10" width="1" height="1" fill="#b8b4b0"/><rect x="4" y="12" width="1" height="1" fill="#b8b4b0"/><rect x="4" y="14" width="1" height="1" fill="#b8b4b0"/><rect x="4" y="16" width="1" height="1" fill="#b8b4b0"/><rect x="4" y="18" width="1" height="1" fill="#b8b4b0"/></svg>
<div style="position:absolute;left:35px;top:1028px;width:199px;height:21px;background:linear-gradient(#fbfbfa,#ecebea);box-sizing:border-box;border:1px solid #a8a39e;border-radius:3px"></div>
<div style="left:66px;position:absolute;top:1030.48px;font-family:'Liberation Sans', sans-serif;font-size:14.2px;line-height:14.2px;color:#1a1a1a;font-weight:400;white-space:pre;letter-spacing:0.28px;">Documents - File Brow...</div>

<svg style="position:absolute;left:41px;top:1030px;" width="18" height="18" viewBox="0 0 18 18"><path d="M1 4 L6 4 L7.5 6 L14 6 L14 16 L1 16 Z" fill="#b0a8a0" stroke="#6a6058"/><path d="M2 7 L16 7 L15 16 L1 16 Z" fill="#e0602a" stroke="#8a3010" stroke-width="0.8"/>
<path d="M9 9 L9 17 L11 15 L13 18 L14 17.5 L12.5 14.5 L15 14.5 Z" fill="#fff" stroke="#444" stroke-width="0.7"/></svg>
<div style="position:absolute;left:236px;top:1028px;width:198px;height:21px;background:linear-gradient(#fbfbfa,#ecebea);box-sizing:border-box;border:1px solid #a8a39e;border-radius:3px"></div>
<div style="left:267px;position:absolute;top:1030.48px;font-family:'Liberation Sans', sans-serif;font-size:14.2px;line-height:14.2px;color:#1a1a1a;font-weight:400;white-space:pre;letter-spacing:0.28px;">[dxf2gcode - Google S...</div>

<svg style="position:absolute;left:243px;top:1030px;" width="17" height="17" viewBox="0 0 17 17"><circle cx="8.5" cy="8.5" r="7.5" fill="#c6d8ea"/><circle cx="8.5" cy="8.5" r="3.2" fill="#a8c0dc" stroke="#f0f4f8" stroke-width="1"/></svg>
<div style="position:absolute;left:437px;top:1028px;width:199px;height:21px;background:linear-gradient(#cdcac6,#c3bfbb);box-sizing:border-box;border:1px solid #a8a39e;border-radius:3px"></div>
<div style="left:468px;position:absolute;top:1030.48px;font-family:'Liberation Sans', sans-serif;font-size:14.2px;line-height:14.2px;color:#1a1a1a;font-weight:400;white-space:pre;letter-spacing:0.28px;">cnct7.ngc</div>

<svg style="position:absolute;left:444px;top:1029px;" width="18" height="19" viewBox="0 0 18 19"><g stroke="#fff" stroke-width="3" fill="none"><path d="M2 2 H6 M4 2 V12 M2 12 H6 M8 2 L16 12 M16 2 L8 12 M8 15 H16 M8.5 13.5 V16.5 M15.5 13.5 V16.5"/></g>
<g stroke="#000" stroke-width="1.2" fill="none"><path d="M2 2 H6 M4 2 V12 M2 12 H6 M8 2 L16 12 M16 2 L8 12 M8 15 H16 M8.5 13.5 V16.5 M15.5 13.5 V16.5"/></g></svg>
<div style="position:absolute;left:1523px;top:1027px;width:130px;height:22px;background:#aaa6a2;border-radius:3px;border:1px solid #9a9692;box-sizing:border-box"></div>
<div style="position:absolute;left:1524px;top:1028px;width:32px;height:20px;background:#cfe0f4;border-bottom:1px solid #4a6fa0;box-sizing:border-box"></div>
<div style="position:absolute;left:1588px;top:1028px;width:1px;height:20px;background:#d8d5d2"></div>
<div style="position:absolute;left:1620px;top:1028px;width:1px;height:20px;background:#d8d5d2"></div>
<svg style="position:absolute;left:1531px;top:1029px;" width="18" height="18" viewBox="0 0 18 18"><g stroke="#000" stroke-width="1.1" fill="none"><path d="M2 2 H5 M3.5 2 V11 M2 11 H5 M7 2 L14 11 M14 2 L7 11 M7 14 H14 M7.5 12.5 V15.5 M13.5 12.5 V15.5"/></g></svg>
<svg style="position:absolute;left:1657px;top:1027px;" width="23" height="23" viewBox="0 0 23 23"><path d="M3 3 L19 3 L17 21 L5 21 Z" fill="#d8d8d8" stroke="#8a8a8a"/><ellipse cx="11" cy="3.5" rx="8.5" ry="2" fill="#eee" stroke="#8a8a8a"/>
<path d="M7 8 Q11 12 15 9 M7 14 Q11 17 15 14" stroke="#fff" stroke-width="2" fill="none"/></svg>
<svg style="position:absolute;left:299px;top:136px;overflow:hidden" width="1377" height="713" viewBox="299 136 1377 713"><line x1="533.3" y1="136.0" x2="615.4" y2="625.4" stroke="#ff2020" stroke-width="1.0" stroke-dasharray="1 2.6"/><line x1="615.4" y1="625.4" x2="352.0" y2="849.0" stroke="#ff2020" stroke-width="1.0" stroke-dasharray="1 2.6"/><line x1="615.4" y1="625.4" x2="1345.0" y2="851.0" stroke="#ff2020" stroke-width="1.0" stroke-dasharray="1 2.6"/><line x1="1680.0" y1="642.0" x2="1614.3" y2="849.0" stroke="#ff2020" stroke-width="1.0" stroke-dasharray="1 2.6"/><line x1="601.0" y1="636.2" x2="1226.0" y2="831.6" stroke="#f08a8a" stroke-width="1.0" /><line x1="589.5" y1="644.8" x2="611.4" y2="626.7" stroke="#f08a8a" stroke-width="1.0" /><line x1="1232.9" y1="818.8" x2="1220.8" y2="846.0" stroke="#f08a8a" stroke-width="1.0" /><line x1="590.5" y1="583.8" x2="897.1" y2="348.3" stroke="#f08a8a" stroke-width="1.0" /><line x1="577.1" y1="580.0" x2="603.8" y2="588.6" stroke="#f08a8a" stroke-width="1.0" /><line x1="888.4" y1="344.0" x2="908.2" y2="348.3" stroke="#f08a8a" stroke-width="1.0" /><line x1="533.3" y1="555.2" x2="545.7" y2="618.0" stroke="#f08a8a" stroke-width="1.0" /><line x1="520.0" y1="551.4" x2="546.7" y2="558.0" stroke="#f08a8a" stroke-width="1.0" /><line x1="533.3" y1="614.3" x2="560.0" y2="622.9" stroke="#f08a8a" stroke-width="1.0" /><line x1="520.0" y1="599.0" x2="536.2" y2="603.8" stroke="#f08a8a" stroke-width="1.0" /><polyline points="732.2,455.6 731.4,453.4 748.0,456.6" fill="none" stroke="#f08a8a" stroke-width="1.0" stroke-linejoin="round" /><polyline points="742.7,445.8 739.6,447.1 739.9,449.1 745.7,451.1 751.5,451.9 755.7,450.7 756.1,448.8 753.3,447.5 748.6,447.4 745.4,448.7 745.9,450.9" fill="none" stroke="#f08a8a" stroke-width="1.0" stroke-linejoin="round" /><polyline points="759.1,440.2 755.2,439.7 751.5,439.8 748.8,440.3 747.5,441.3 748.0,442.4 750.1,443.6 753.4,444.5 757.3,445.0 761.0,444.9 763.7,444.4 765.0,443.4 764.5,442.3 762.4,441.1 759.1,440.2" fill="none" stroke="#f08a8a" stroke-width="1.0" stroke-linejoin="round" /><polyline points="772.6,437.8 773.5,437.1 772.1,436.9 771.3,437.5 772.6,437.8" fill="none" stroke="#f08a8a" stroke-width="1.0" stroke-linejoin="round" /><polyline points="776.1,427.2 772.2,426.7 768.5,426.8 765.8,427.3 764.5,428.3 765.0,429.4 767.1,430.6 770.4,431.5 774.3,432.0 778.0,431.9 780.7,431.4 782.0,430.4 781.5,429.3 779.4,428.1 776.1,427.2" fill="none" stroke="#f08a8a" stroke-width="1.0" stroke-linejoin="round" /><polyline points="829.4,330.5 834.0,330.1 825.1,335.8" fill="none" stroke="#f08a8a" stroke-width="1.0" stroke-linejoin="round" /><polyline points="848.0,333.2 845.6,332.3 841.5,332.5 836.8,334.6 834.3,336.6 836.0,337.9 839.8,337.8 842.9,336.8 843.8,335.3 841.5,334.3 837.0,334.6" fill="none" stroke="#f08a8a" stroke-width="1.0" stroke-linejoin="round" /><polyline points="856.9,338.2 858.4,336.8 858.9,335.6 858.2,334.8 856.4,334.5 854.0,334.7 851.3,335.5 849.0,336.6 847.5,338.0 847.0,339.2 847.7,340.0 849.5,340.3 851.9,340.1 854.6,339.3 856.9,338.2" fill="none" stroke="#f08a8a" stroke-width="1.0" stroke-linejoin="round" /><polyline points="859.9,342.4 861.1,342.7 861.8,342.2 860.6,342.0 859.9,342.4" fill="none" stroke="#f08a8a" stroke-width="1.0" stroke-linejoin="round" /><polyline points="880.9,342.8 882.4,341.4 882.9,340.2 882.2,339.4 880.4,339.1 878.0,339.3 875.3,340.1 873.0,341.2 871.5,342.6 871.0,343.8 871.7,344.6 873.5,344.9 875.9,344.7 878.6,343.9 880.9,342.8" fill="none" stroke="#f08a8a" stroke-width="1.0" stroke-linejoin="round" /><polyline points="838.9,720.6 845.9,719.1 831.9,735.6" fill="none" stroke="#f08a8a" stroke-width="1.0" stroke-linejoin="round" /><polyline points="868.4,726.1 859.0,723.2 852.1,729.8 857.1,730.1 860.2,733.1 858.6,737.6 852.7,740.8 847.6,740.5 844.9,737.1" fill="none" stroke="#f08a8a" stroke-width="1.0" stroke-linejoin="round" /><polyline points="879.9,740.1 882.4,736.3 883.2,733.0 882.1,730.6 879.5,729.8 875.8,730.6 871.7,733.0 868.1,736.4 865.6,740.2 864.8,743.5 865.9,745.9 868.5,746.7 872.2,745.9 876.3,743.5 879.9,740.1" fill="none" stroke="#f08a8a" stroke-width="1.0" stroke-linejoin="round" /><polyline points="884.1,751.8 885.9,752.4 887.0,751.1 885.2,750.5 884.1,751.8" fill="none" stroke="#f08a8a" stroke-width="1.0" stroke-linejoin="round" /><polyline points="915.9,751.3 918.4,747.5 919.2,744.2 918.1,741.8 915.5,741.0 911.8,741.8 907.7,744.2 904.1,747.6 901.6,751.4 900.8,754.7 901.9,757.1 904.5,757.9 908.2,757.1 912.3,754.7 915.9,751.3" fill="none" stroke="#f08a8a" stroke-width="1.0" stroke-linejoin="round" /><polyline points="457.9,526.2 459.8,523.7 467.8,543.7" fill="none" stroke="#f08a8a" stroke-width="1.0" stroke-linejoin="round" /><polyline points="476.4,528.8 469.5,526.6 472.1,534.8 474.7,534.5 478.8,537.6 482.0,542.8 482.1,547.0 479.4,547.2 475.2,543.8" fill="none" stroke="#f08a8a" stroke-width="1.0" stroke-linejoin="round" /><polyline points="493.1,551.4 494.4,551.9 493.8,550.3 492.4,549.8 493.1,551.4" fill="none" stroke="#f08a8a" stroke-width="1.0" stroke-linejoin="round" /><polyline points="507.4,547.1 505.3,542.6 502.7,538.8 500.1,536.3 498.2,535.7 497.2,537.1 497.4,540.2 498.7,544.4 500.8,548.9 503.4,552.7 506.0,555.2 507.9,555.8 508.9,554.4 508.7,551.3 507.4,547.1" fill="none" stroke="#f08a8a" stroke-width="1.0" stroke-linejoin="round" /><polyline points="466.5,596.1 476.3,599.1" fill="none" stroke="#f08a8a" stroke-width="1.0" stroke-linejoin="round" /><polyline points="478.0,592.5 480.7,591.6 485.0,594.6 486.9,598.7 484.3,600.6 489.5,604.5 492.3,609.9 490.2,612.1 486.6,611.0 483.5,607.9" fill="none" stroke="#f08a8a" stroke-width="1.0" stroke-linejoin="round" /><polyline points="502.7,615.8 504.1,616.2 503.5,614.6 502.1,614.2 502.7,615.8" fill="none" stroke="#f08a8a" stroke-width="1.0" stroke-linejoin="round" /><polyline points="518.0,611.6 515.8,607.1 513.2,603.2 510.5,600.8 508.5,600.1 507.4,601.5 507.5,604.6 508.8,608.8 511.0,613.3 513.6,617.2 516.3,619.6 518.3,620.3 519.4,618.9 519.3,615.8 518.0,611.6" fill="none" stroke="#f08a8a" stroke-width="1.0" stroke-linejoin="round" /><ellipse cx="519" cy="559" rx="11" ry="6.5" transform="rotate(25 519 559)" fill="none" stroke="#f08a8a" stroke-width="1"/><ellipse cx="558.5" cy="575.2" rx="11.5" ry="6" transform="rotate(20 558.5 575.2)" fill="none" stroke="#f08a8a" stroke-width="1"/><ellipse cx="533.8" cy="564.8" rx="10" ry="6.5" transform="rotate(-35 533.8 564.8)" fill="none" stroke="#f08a8a" stroke-width="1"/><ellipse cx="524.7" cy="586.6" rx="10" ry="7" transform="rotate(-60 524.7 586.6)" fill="none" stroke="#f08a8a" stroke-width="1"/><rect x="530" y="575.5" width="1.5" height="1.5" fill="#f08a8a"/><ellipse cx="572.4" cy="659" rx="12.5" ry="6" transform="rotate(-15 572.4 659)" fill="none" stroke="#f08a8a" stroke-width="1"/><ellipse cx="548.6" cy="679" rx="12.5" ry="6.5" transform="rotate(-15 548.6 679)" fill="none" stroke="#f08a8a" stroke-width="1"/><rect x="568" y="671.5" width="2" height="2" fill="#f08a8a"/><polyline points="642.0,594.0 977.0,695.2 1307.2,640.0 1359.3,516.0 1198.1,400.1 940.8,351.9 642.0,594.0" fill="none" stroke="#cd5656" stroke-width="1.8" stroke-linejoin="round" /><polyline points="642.9,599.6 977.3,701.4 1306.8,645.9 1358.8,521.3 1197.9,404.8 941.0,356.2 642.9,599.6" fill="none" stroke="#cd5656" stroke-width="1.8" stroke-linejoin="round" /><polyline points="723.5,590.5 724.9,589.1 725.8,587.6 726.3,586.1 726.4,584.6 725.9,583.2 725.1,581.8 723.7,580.7 722.1,579.7 720.0,579.0 717.7,578.4 715.2,578.2 712.6,578.2 709.9,578.4 707.2,578.9 704.7,579.6 702.3,580.6 700.2,581.7 698.4,583.0 697.0,584.5 696.0,585.9 695.4,587.5 695.3,589.0 695.7,590.4 696.5,591.8 697.8,593.0 699.5,594.0 701.5,594.7 703.9,595.3 706.4,595.6 709.1,595.6 711.9,595.3 714.6,594.8 717.2,594.0 719.6,593.0 721.7,591.9 723.5,590.5" fill="none" stroke="#cd5656" stroke-width="1.5" stroke-linejoin="round" /><polyline points="724.2,596.1 725.6,594.7 726.6,593.2 727.1,591.6 727.1,590.1 726.7,588.7 725.8,587.4 724.5,586.2 722.8,585.2 720.8,584.5 718.5,584.0 716.0,583.7 713.3,583.7 710.6,583.9 708.0,584.4 705.5,585.2 703.1,586.1 701.0,587.3 699.2,588.6 697.7,590.0 696.7,591.5 696.2,593.0 696.1,594.6 696.5,596.0 697.3,597.3 698.6,598.5 700.3,599.6 702.3,600.3 704.7,600.9 707.2,601.2 709.9,601.2 712.6,600.9 715.3,600.4 717.9,599.6 720.3,598.6 722.4,597.5 724.2,596.1" fill="none" stroke="#cd5656" stroke-width="1.5" stroke-linejoin="round" /><polyline points="765.6,549.1 766.5,548.1 767.2,547.1 767.5,546.1 767.4,545.1 767.1,544.2 766.4,543.3 765.5,542.5 764.2,541.9 762.8,541.4 761.1,541.0 759.4,540.8 757.5,540.8 755.6,541.0 753.8,541.3 752.0,541.8 750.4,542.5 748.9,543.2 747.7,544.1 746.8,545.1 746.1,546.0 745.8,547.1 745.8,548.1 746.1,549.0 746.8,549.9 747.7,550.7 749.0,551.4 750.4,551.9 752.1,552.2 753.9,552.4 755.8,552.4 757.7,552.3 759.6,551.9 761.3,551.4 763.0,550.7 764.4,550.0 765.6,549.1" fill="none" stroke="#cd5656" stroke-width="1.5" stroke-linejoin="round" /><polyline points="766.2,554.5 767.2,553.5 767.8,552.5 768.1,551.5 768.1,550.5 767.7,549.5 767.0,548.6 766.1,547.9 764.8,547.2 763.4,546.7 761.7,546.4 760.0,546.2 758.1,546.2 756.3,546.3 754.4,546.7 752.6,547.2 751.0,547.8 749.6,548.6 748.4,549.5 747.4,550.4 746.8,551.4 746.5,552.4 746.5,553.4 746.8,554.4 747.4,555.3 748.4,556.1 749.6,556.8 751.1,557.3 752.7,557.6 754.5,557.8 756.4,557.8 758.3,557.7 760.2,557.3 762.0,556.8 763.6,556.1 765.0,555.4 766.2,554.5" fill="none" stroke="#cd5656" stroke-width="1.5" stroke-linejoin="round" /><polyline points="942.3,393.3 942.9,392.6 943.2,392.0 943.3,391.3 943.1,390.6 942.6,390.0 941.8,389.4 940.9,388.9 939.7,388.4 938.4,388.1 936.9,387.9 935.4,387.8 933.8,387.8 932.2,387.9 930.7,388.1 929.3,388.5 928.0,388.9 927.0,389.4 926.1,390.0 925.5,390.6 925.1,391.3 925.1,392.0 925.3,392.7 925.7,393.3 926.5,393.9 927.4,394.4 928.6,394.9 930.0,395.2 931.4,395.5 933.0,395.6 934.6,395.6 936.2,395.5 937.7,395.2 939.1,394.9 940.4,394.4 941.4,393.9 942.3,393.3" fill="none" stroke="#cd5656" stroke-width="1.5" stroke-linejoin="round" /><polyline points="942.5,397.8 943.1,397.2 943.5,396.5 943.5,395.8 943.3,395.1 942.8,394.5 942.1,393.9 941.1,393.4 939.9,393.0 938.6,392.6 937.1,392.4 935.6,392.3 934.0,392.3 932.5,392.4 930.9,392.6 929.5,393.0 928.3,393.4 927.2,393.9 926.4,394.5 925.7,395.2 925.4,395.9 925.3,396.5 925.5,397.2 926.0,397.9 926.7,398.5 927.7,399.0 928.9,399.4 930.2,399.8 931.7,400.0 933.2,400.1 934.8,400.1 936.4,400.0 937.9,399.8 939.3,399.4 940.6,399.0 941.7,398.4 942.5,397.8" fill="none" stroke="#cd5656" stroke-width="1.5" stroke-linejoin="round" /><polyline points="971.9,369.9 972.7,369.1 973.1,368.2 973.1,367.4 972.8,366.5 972.1,365.7 971.1,365.0 969.8,364.4 968.3,363.8 966.5,363.4 964.6,363.1 962.6,363.0 960.5,363.0 958.5,363.1 956.5,363.4 954.7,363.9 953.1,364.4 951.7,365.1 950.6,365.8 949.9,366.6 949.4,367.5 949.4,368.3 949.7,369.2 950.3,370.0 951.3,370.7 952.6,371.4 954.1,371.9 955.9,372.4 957.9,372.7 959.9,372.8 962.0,372.8 964.1,372.6 966.0,372.3 967.9,371.9 969.5,371.3 970.9,370.7 971.9,369.9" fill="none" stroke="#cd5656" stroke-width="1.5" stroke-linejoin="round" /><polyline points="972.1,374.3 972.9,373.5 973.3,372.7 973.3,371.8 973.0,370.9 972.3,370.1 971.3,369.4 970.0,368.7 968.4,368.2 966.7,367.8 964.8,367.5 962.7,367.4 960.7,367.4 958.7,367.5 956.7,367.8 954.9,368.2 953.3,368.8 951.9,369.5 950.8,370.2 950.1,371.0 949.6,371.9 949.6,372.7 949.9,373.6 950.5,374.4 951.5,375.1 952.8,375.8 954.3,376.4 956.1,376.8 958.1,377.1 960.1,377.2 962.2,377.2 964.3,377.1 966.2,376.8 968.1,376.3 969.7,375.8 971.1,375.1 972.1,374.3" fill="none" stroke="#cd5656" stroke-width="1.5" stroke-linejoin="round" /><polyline points="1160.1,403.4 1160.5,402.7 1160.6,402.0 1160.4,401.3 1159.9,400.6 1159.2,399.9 1158.2,399.3 1157.0,398.8 1155.6,398.3 1154.1,398.0 1152.6,397.8 1150.9,397.6 1149.3,397.6 1147.7,397.8 1146.2,398.0 1144.9,398.4 1143.8,398.8 1142.9,399.4 1142.2,400.0 1141.8,400.6 1141.7,401.3 1141.8,402.1 1142.3,402.8 1143.0,403.4 1144.0,404.1 1145.2,404.6 1146.5,405.1 1148.0,405.4 1149.7,405.7 1151.3,405.8 1153.0,405.8 1154.6,405.7 1156.0,405.4 1157.4,405.0 1158.5,404.6 1159.4,404.0 1160.1,403.4" fill="none" stroke="#cd5656" stroke-width="1.5" stroke-linejoin="round" /><polyline points="1160.0,408.1 1160.4,407.4 1160.5,406.7 1160.3,405.9 1159.8,405.2 1159.1,404.6 1158.1,404.0 1156.9,403.4 1155.5,403.0 1154.0,402.6 1152.5,402.4 1150.8,402.2 1149.2,402.3 1147.6,402.4 1146.2,402.6 1144.8,403.0 1143.7,403.4 1142.8,404.0 1142.1,404.6 1141.7,405.3 1141.6,406.0 1141.8,406.7 1142.2,407.4 1142.9,408.1 1143.9,408.7 1145.1,409.3 1146.4,409.7 1148.0,410.1 1149.6,410.3 1151.2,410.4 1152.9,410.4 1154.5,410.3 1155.9,410.1 1157.3,409.7 1158.4,409.2 1159.3,408.7 1160.0,408.1" fill="none" stroke="#cd5656" stroke-width="1.5" stroke-linejoin="round" /><polyline points="1126.9,431.8 1127.3,431.1 1127.5,430.3 1127.3,429.6 1126.9,428.8 1126.2,428.1 1125.2,427.4 1124.0,426.8 1122.6,426.3 1121.0,425.9 1119.4,425.7 1117.7,425.5 1116.0,425.5 1114.3,425.7 1112.8,425.9 1111.4,426.3 1110.2,426.8 1109.2,427.4 1108.4,428.1 1108.0,428.8 1107.8,429.6 1107.9,430.4 1108.4,431.1 1109.1,431.9 1110.1,432.5 1111.3,433.1 1112.7,433.6 1114.2,434.0 1115.9,434.3 1117.6,434.4 1119.3,434.4 1121.0,434.3 1122.6,434.0 1124.0,433.6 1125.2,433.1 1126.2,432.5 1126.9,431.8" fill="none" stroke="#cd5656" stroke-width="1.5" stroke-linejoin="round" /><polyline points="1126.9,436.6 1127.3,435.9 1127.4,435.1 1127.3,434.4 1126.8,433.6 1126.1,432.9 1125.1,432.2 1123.9,431.6 1122.5,431.1 1121.0,430.7 1119.3,430.4 1117.6,430.3 1115.9,430.3 1114.3,430.4 1112.7,430.7 1111.3,431.1 1110.1,431.6 1109.1,432.2 1108.4,432.9 1107.9,433.6 1107.8,434.4 1107.9,435.2 1108.3,435.9 1109.1,436.7 1110.0,437.3 1111.2,437.9 1112.6,438.5 1114.2,438.9 1115.9,439.1 1117.6,439.3 1119.3,439.3 1121.0,439.1 1122.5,438.8 1123.9,438.4 1125.1,437.9 1126.1,437.3 1126.9,436.6" fill="none" stroke="#cd5656" stroke-width="1.5" stroke-linejoin="round" /><polyline points="1108.5,462.3 1108.9,461.5 1109.1,460.7 1109.0,459.9 1108.5,459.1 1107.8,458.3 1106.8,457.6 1105.6,457.0 1104.2,456.4 1102.7,456.0 1101.0,455.8 1099.3,455.6 1097.6,455.6 1095.9,455.8 1094.4,456.0 1092.9,456.4 1091.7,457.0 1090.7,457.6 1089.9,458.3 1089.4,459.1 1089.3,459.9 1089.4,460.7 1089.8,461.5 1090.5,462.3 1091.4,463.0 1092.6,463.6 1094.1,464.2 1095.6,464.6 1097.3,464.9 1099.0,465.0 1100.8,465.0 1102.4,464.9 1104.0,464.6 1105.5,464.2 1106.7,463.6 1107.7,463.0 1108.5,462.3" fill="none" stroke="#cd5656" stroke-width="1.5" stroke-linejoin="round" /><polyline points="1108.4,467.3 1108.9,466.5 1109.1,465.7 1108.9,464.8 1108.5,464.0 1107.8,463.3 1106.8,462.5 1105.6,461.9 1104.2,461.4 1102.7,461.0 1101.0,460.7 1099.3,460.6 1097.6,460.6 1095.9,460.7 1094.4,461.0 1092.9,461.4 1091.7,461.9 1090.7,462.5 1089.9,463.3 1089.5,464.0 1089.3,464.8 1089.4,465.7 1089.8,466.5 1090.5,467.3 1091.4,468.0 1092.6,468.6 1094.1,469.2 1095.6,469.6 1097.3,469.9 1099.0,470.0 1100.7,470.0 1102.4,469.9 1104.0,469.6 1105.5,469.2 1106.7,468.6 1107.7,468.0 1108.4,467.3" fill="none" stroke="#cd5656" stroke-width="1.5" stroke-linejoin="round" /><polyline points="1023.1,567.3 1023.8,566.3 1024.1,565.2 1024.0,564.1 1023.7,563.1 1023.0,562.1 1022.0,561.2 1020.7,560.4 1019.2,559.7 1017.5,559.1 1015.7,558.8 1013.8,558.6 1011.8,558.6 1009.9,558.7 1008.1,559.1 1006.5,559.6 1005.0,560.3 1003.8,561.1 1002.8,562.0 1002.2,563.0 1001.8,564.1 1001.8,565.1 1002.2,566.2 1002.9,567.2 1003.9,568.2 1005.1,569.0 1006.6,569.7 1008.3,570.2 1010.2,570.6 1012.1,570.8 1014.1,570.8 1016.0,570.6 1017.8,570.3 1019.5,569.7 1021.0,569.0 1022.2,568.2 1023.1,567.3" fill="none" stroke="#cd5656" stroke-width="1.5" stroke-linejoin="round" /><polyline points="1023.3,572.8 1023.9,571.8 1024.2,570.7 1024.2,569.7 1023.8,568.6 1023.1,567.6 1022.1,566.7 1020.8,565.8 1019.3,565.1 1017.6,564.6 1015.8,564.2 1013.9,564.0 1012.0,564.0 1010.1,564.2 1008.3,564.6 1006.6,565.1 1005.2,565.8 1003.9,566.6 1003.0,567.5 1002.3,568.5 1002.0,569.6 1002.0,570.6 1002.4,571.7 1003.0,572.7 1004.0,573.7 1005.3,574.5 1006.8,575.2 1008.5,575.8 1010.3,576.1 1012.3,576.3 1014.2,576.4 1016.1,576.2 1018.0,575.8 1019.6,575.3 1021.1,574.6 1022.3,573.7 1023.3,572.8" fill="none" stroke="#cd5656" stroke-width="1.5" stroke-linejoin="round" /><polyline points="1235.1,620.6 1235.5,619.5 1235.5,618.3 1235.2,617.1 1234.5,615.9 1233.5,614.8 1232.1,613.7 1230.6,612.8 1228.8,612.0 1226.8,611.4 1224.8,611.0 1222.7,610.8 1220.7,610.8 1218.7,611.0 1216.9,611.4 1215.3,612.0 1213.9,612.7 1212.8,613.6 1212.1,614.7 1211.7,615.8 1211.6,617.0 1211.9,618.2 1212.6,619.4 1213.6,620.5 1214.9,621.6 1216.5,622.5 1218.3,623.3 1220.2,623.9 1222.3,624.4 1224.4,624.6 1226.5,624.6 1228.5,624.4 1230.3,624.0 1231.9,623.4 1233.3,622.6 1234.4,621.7 1235.1,620.6" fill="none" stroke="#cd5656" stroke-width="1.5" stroke-linejoin="round" /><polyline points="1234.8,626.4 1235.2,625.3 1235.2,624.1 1234.9,622.9 1234.2,621.7 1233.2,620.6 1231.8,619.5 1230.3,618.6 1228.5,617.8 1226.6,617.2 1224.5,616.8 1222.5,616.6 1220.4,616.6 1218.5,616.8 1216.6,617.2 1215.0,617.7 1213.7,618.5 1212.6,619.4 1211.8,620.5 1211.4,621.6 1211.4,622.8 1211.7,624.0 1212.3,625.2 1213.3,626.3 1214.6,627.4 1216.2,628.3 1218.0,629.1 1220.0,629.7 1222.0,630.2 1224.1,630.4 1226.2,630.4 1228.2,630.2 1230.0,629.8 1231.6,629.2 1233.0,628.4 1234.1,627.5 1234.8,626.4" fill="none" stroke="#cd5656" stroke-width="1.5" stroke-linejoin="round" /><polyline points="955.0,661.4 955.8,660.1 956.2,658.8 956.3,657.5 956.0,656.2 955.3,655.0 954.3,653.9 953.0,652.9 951.4,652.0 949.6,651.4 947.6,650.9 945.6,650.7 943.5,650.6 941.4,650.9 939.4,651.3 937.5,651.9 935.8,652.7 934.4,653.7 933.3,654.9 932.4,656.1 932.0,657.4 931.9,658.7 932.2,660.0 932.8,661.2 933.8,662.4 935.1,663.4 936.7,664.3 938.5,664.9 940.5,665.4 942.6,665.7 944.7,665.7 946.8,665.5 948.9,665.0 950.8,664.4 952.5,663.5 953.9,662.5 955.0,661.4" fill="none" stroke="#cd5656" stroke-width="1.5" stroke-linejoin="round" /><polyline points="955.3,667.3 956.1,666.1 956.5,664.8 956.6,663.5 956.3,662.2 955.6,660.9 954.6,659.8 953.3,658.8 951.7,657.9 949.9,657.3 947.9,656.8 945.9,656.6 943.8,656.6 941.7,656.8 939.7,657.2 937.8,657.8 936.2,658.7 934.7,659.7 933.6,660.8 932.8,662.0 932.3,663.3 932.2,664.6 932.5,665.9 933.2,667.2 934.1,668.3 935.4,669.4 937.0,670.2 938.8,670.9 940.8,671.4 942.9,671.6 945.0,671.7 947.2,671.4 949.2,671.0 951.1,670.3 952.8,669.5 954.2,668.5 955.3,667.3" fill="none" stroke="#cd5656" stroke-width="1.5" stroke-linejoin="round" /><polyline points="983.4,608.0 984.1,606.9 984.5,605.8 984.5,604.6 984.1,603.5 983.5,602.4 982.5,601.4 981.2,600.5 979.7,599.7 978.0,599.1 976.1,598.7 974.2,598.5 972.2,598.5 970.2,598.7 968.4,599.1 966.6,599.7 965.1,600.4 963.8,601.3 962.7,602.3 962.0,603.3 961.6,604.5 961.6,605.6 961.9,606.8 962.5,607.9 963.5,608.9 964.7,609.8 966.2,610.6 968.0,611.2 969.8,611.6 971.8,611.8 973.8,611.8 975.8,611.6 977.7,611.2 979.5,610.6 981.1,609.9 982.4,609.0 983.4,608.0" fill="none" stroke="#cd5656" stroke-width="1.5" stroke-linejoin="round" /><polyline points="983.6,613.7 984.3,612.6 984.7,611.5 984.7,610.3 984.4,609.1 983.7,608.0 982.7,607.0 981.4,606.1 979.9,605.4 978.2,604.8 976.4,604.4 974.4,604.2 972.4,604.2 970.5,604.4 968.6,604.8 966.9,605.3 965.3,606.1 964.0,606.9 963.0,607.9 962.3,609.0 961.9,610.2 961.8,611.3 962.1,612.5 962.8,613.6 963.7,614.6 965.0,615.5 966.5,616.3 968.2,616.9 970.1,617.3 972.1,617.5 974.1,617.5 976.1,617.4 978.0,617.0 979.7,616.4 981.3,615.6 982.6,614.7 983.6,613.7" fill="none" stroke="#cd5656" stroke-width="1.5" stroke-linejoin="round" /><polyline points="1296.1,503.2 1296.3,502.3 1296.3,501.4 1295.9,500.5 1295.2,499.6 1294.2,498.8 1293.0,498.0 1291.5,497.3 1289.9,496.7 1288.2,496.2 1286.3,495.9 1284.5,495.8 1282.7,495.8 1281.0,495.9 1279.4,496.2 1278.0,496.7 1276.9,497.3 1276.0,497.9 1275.4,498.7 1275.1,499.6 1275.1,500.5 1275.5,501.4 1276.1,502.3 1277.1,503.2 1278.3,504.0 1279.8,504.7 1281.4,505.3 1283.2,505.7 1285.0,506.0 1286.9,506.2 1288.7,506.2 1290.4,506.0 1292.0,505.7 1293.4,505.3 1294.6,504.7 1295.5,504.0 1296.1,503.2" fill="none" stroke="#cd5656" stroke-width="1.5" stroke-linejoin="round" /><polyline points="1295.7,508.4 1296.0,507.5 1295.9,506.6 1295.5,505.7 1294.8,504.8 1293.9,504.0 1292.6,503.2 1291.2,502.5 1289.6,501.9 1287.8,501.4 1286.0,501.1 1284.2,501.0 1282.4,501.0 1280.6,501.1 1279.1,501.4 1277.7,501.9 1276.5,502.5 1275.6,503.1 1275.0,503.9 1274.8,504.8 1274.8,505.7 1275.1,506.6 1275.8,507.5 1276.8,508.4 1278.0,509.2 1279.4,509.9 1281.1,510.5 1282.8,511.0 1284.7,511.3 1286.5,511.4 1288.3,511.4 1290.1,511.3 1291.7,511.0 1293.1,510.5 1294.2,509.9 1295.1,509.2 1295.7,508.4" fill="none" stroke="#cd5656" stroke-width="1.5" stroke-linejoin="round" /><polyline points="798.5,494.2 797.6,495.2 797.1,496.2 797.1,497.3 797.5,498.3 798.4,499.2 799.7,499.9 801.4,500.5 803.3,500.9 805.3,501.0 807.5,500.8 809.6,500.5 811.5,499.9 813.1,499.1 814.5,498.2 891.5,432.4 892.3,431.5 892.6,430.7 892.5,429.8 892.0,429.0 891.1,428.2 889.8,427.6 888.2,427.2 886.5,426.9 884.6,426.8 882.7,426.9 880.9,427.2 879.2,427.7 877.7,428.3 876.6,429.1 798.5,494.2" fill="none" stroke="#cd5656" stroke-width="1.5" stroke-linejoin="round" /><polyline points="799.1,499.3 798.1,500.3 797.6,501.4 797.6,502.4 798.0,503.4 798.9,504.3 800.2,505.1 801.9,505.7 803.8,506.0 805.9,506.1 808.0,506.0 810.1,505.6 812.0,505.0 813.6,504.3 815.0,503.4 891.9,437.2 892.6,436.3 892.9,435.4 892.8,434.6 892.3,433.7 891.4,433.0 890.1,432.4 888.6,431.9 886.8,431.7 884.9,431.6 883.0,431.7 881.2,432.0 879.5,432.5 878.1,433.1 876.9,433.8 799.1,499.3" fill="none" stroke="#cd5656" stroke-width="1.5" stroke-linejoin="round" /><polyline points="1182.7,587.8 1182.2,589.1 1182.3,590.4 1182.9,591.8 1184.1,593.1 1185.6,594.3 1187.6,595.2 1189.9,596.0 1192.3,596.4 1194.8,596.6 1197.2,596.4 1199.4,595.9 1201.2,595.2 1202.7,594.2 1203.6,593.0 1248.9,513.4 1249.2,512.3 1249.1,511.2 1248.4,510.1 1247.3,509.1 1245.8,508.1 1244.0,507.3 1241.9,506.8 1239.7,506.4 1237.5,506.3 1235.4,506.4 1233.4,506.8 1231.8,507.4 1230.5,508.2 1229.7,509.1 1182.7,587.8" fill="none" stroke="#cd5656" stroke-width="1.5" stroke-linejoin="round" /><polyline points="1182.5,593.4 1182.0,594.7 1182.1,596.1 1182.7,597.5 1183.9,598.8 1185.5,600.0 1187.4,600.9 1189.7,601.7 1192.1,602.1 1194.6,602.3 1197.0,602.1 1199.1,601.7 1201.0,600.9 1202.4,599.9 1203.4,598.7 1248.6,518.7 1249.0,517.6 1248.8,516.5 1248.1,515.4 1247.0,514.3 1245.5,513.4 1243.7,512.6 1241.6,512.0 1239.4,511.7 1237.2,511.5 1235.1,511.7 1233.2,512.1 1231.5,512.7 1230.3,513.5 1229.4,514.4 1182.5,593.4" fill="none" stroke="#cd5656" stroke-width="1.5" stroke-linejoin="round" /><polyline points="1263.2,608.0 1262.9,609.4 1263.1,610.8 1263.8,612.3 1265.1,613.7 1266.9,614.9 1269.0,615.9 1271.4,616.7 1274.0,617.2 1276.5,617.3 1279.0,617.2 1281.2,616.7 1283.0,615.9 1284.4,614.9 1285.3,613.6 1323.7,530.0 1323.9,528.9 1323.6,527.7 1322.8,526.5 1321.6,525.4 1319.9,524.5 1318.0,523.6 1315.8,523.0 1313.5,522.7 1311.2,522.5 1309.0,522.7 1307.1,523.1 1305.5,523.7 1304.3,524.5 1303.5,525.5 1263.2,608.0" fill="none" stroke="#cd5656" stroke-width="1.5" stroke-linejoin="round" /><polyline points="1262.9,613.8 1262.5,615.2 1262.7,616.6 1263.5,618.1 1264.8,619.5 1266.5,620.7 1268.7,621.7 1271.1,622.5 1273.6,623.0 1276.2,623.2 1278.6,623.0 1280.8,622.5 1282.6,621.7 1284.0,620.7 1284.9,619.4 1323.2,535.4 1323.5,534.3 1323.2,533.1 1322.4,531.9 1321.2,530.8 1319.5,529.8 1317.5,529.0 1315.4,528.4 1313.1,528.0 1310.8,527.9 1308.6,528.0 1306.7,528.4 1305.1,529.1 1303.9,529.9 1303.1,530.9 1262.9,613.8" fill="none" stroke="#cd5656" stroke-width="1.5" stroke-linejoin="round" /><polyline points="1064.8,378.4 1063.2,378.2 1061.4,378.1 1059.7,378.2 1058.2,378.5 1056.8,378.9 1055.6,379.4 1054.8,380.0 1054.3,380.7 1054.2,381.4 1054.5,382.2 1055.1,382.8 1056.1,383.5 1057.4,384.0 1058.9,384.3 1073.3,387.1 1075.0,387.3 1076.8,387.4 1078.5,387.3 1080.1,387.0 1081.5,386.6 1082.6,386.1 1083.4,385.5 1083.9,384.8 1083.9,384.0 1083.6,383.3 1082.9,382.6 1081.9,382.0 1080.6,381.5 1079.1,381.1 1064.8,378.4" fill="none" stroke="#cd5656" stroke-width="1.5" stroke-linejoin="round" /><polyline points="1064.8,382.9 1063.2,382.7 1061.5,382.7 1059.8,382.7 1058.2,383.0 1056.8,383.4 1055.7,383.9 1054.8,384.5 1054.4,385.2 1054.3,386.0 1054.5,386.7 1055.2,387.4 1056.2,388.0 1057.5,388.5 1059.0,388.9 1073.4,391.7 1075.0,391.9 1076.8,392.0 1078.5,391.9 1080.1,391.6 1081.5,391.2 1082.6,390.7 1083.4,390.0 1083.9,389.3 1084.0,388.6 1083.6,387.9 1082.9,387.2 1081.9,386.5 1080.6,386.0 1079.1,385.7 1064.8,382.9" fill="none" stroke="#cd5656" stroke-width="1.5" stroke-linejoin="round" /><polyline points="822.1,626.4 820.0,626.0 817.6,625.8 815.2,626.0 812.9,626.5 810.7,627.2 808.8,628.2 807.3,629.4 806.2,630.8 805.7,632.2 805.7,633.7 806.2,635.1 807.2,636.3 808.7,637.3 810.6,638.1 829.1,643.8 831.3,644.3 833.7,644.4 836.2,644.3 838.6,643.8 840.8,643.0 842.7,641.9 844.2,640.7 845.2,639.3 845.7,637.8 845.6,636.4 845.0,635.0 843.9,633.8 842.4,632.7 840.5,632.0 822.1,626.4" fill="none" stroke="#cd5656" stroke-width="1.5" stroke-linejoin="round" /><polyline points="822.7,632.2 820.5,631.8 818.2,631.6 815.8,631.8 813.5,632.3 811.3,633.0 809.4,634.0 807.9,635.3 806.8,636.6 806.3,638.1 806.3,639.5 806.8,640.9 807.8,642.1 809.3,643.2 811.2,644.0 829.7,649.7 831.9,650.2 834.3,650.3 836.7,650.2 839.1,649.7 841.3,648.9 843.2,647.8 844.7,646.5 845.7,645.1 846.2,643.7 846.1,642.2 845.6,640.8 844.5,639.6 842.9,638.6 841.0,637.8 822.7,632.2" fill="none" stroke="#cd5656" stroke-width="1.5" stroke-linejoin="round" /><polyline points="999.3,523.7 997.3,523.3 995.2,523.2 993.1,523.3 991.1,523.7 989.3,524.3 987.8,525.1 986.7,526.1 986.0,527.1 985.7,528.2 986.0,529.3 986.7,530.4 987.9,531.3 989.4,532.1 991.2,532.7 1008.7,537.1 1010.7,537.5 1012.9,537.6 1015.0,537.4 1017.0,537.1 1018.8,536.4 1020.3,535.6 1021.4,534.6 1022.1,533.6 1022.2,532.4 1021.9,531.3 1021.2,530.2 1020.0,529.3 1018.4,528.5 1016.6,527.9 999.3,523.7" fill="none" stroke="#cd5656" stroke-width="1.5" stroke-linejoin="round" /><polyline points="999.4,529.0 997.4,528.6 995.3,528.5 993.2,528.6 991.2,529.0 989.5,529.6 988.0,530.4 986.9,531.4 986.2,532.4 985.9,533.6 986.2,534.7 986.9,535.7 988.1,536.7 989.6,537.5 991.4,538.1 1008.8,542.5 1010.9,542.8 1013.0,543.0 1015.2,542.8 1017.2,542.4 1019.0,541.8 1020.4,541.0 1021.5,540.0 1022.2,538.9 1022.4,537.8 1022.1,536.7 1021.3,535.6 1020.1,534.6 1018.5,533.9 1016.7,533.3 999.4,529.0" fill="none" stroke="#cd5656" stroke-width="1.5" stroke-linejoin="round" /><polyline points="1039.1,454.9 1037.2,454.6 1035.3,454.5 1033.4,454.6 1031.6,455.0 1030.0,455.5 1028.7,456.1 1027.7,456.9 1027.1,457.8 1027.0,458.7 1027.3,459.6 1028.0,460.5 1029.1,461.3 1030.5,461.9 1032.2,462.4 1048.3,465.9 1050.1,466.2 1052.1,466.3 1054.0,466.2 1055.9,465.9 1057.5,465.4 1058.8,464.7 1059.7,463.9 1060.3,463.0 1060.4,462.1 1060.0,461.2 1059.3,460.3 1058.2,459.5 1056.7,458.9 1055.0,458.4 1039.1,454.9" fill="none" stroke="#cd5656" stroke-width="1.5" stroke-linejoin="round" /><polyline points="1039.2,459.9 1037.3,459.6 1035.4,459.5 1033.5,459.6 1031.7,459.9 1030.1,460.4 1028.8,461.1 1027.8,461.9 1027.2,462.7 1027.1,463.7 1027.4,464.6 1028.1,465.5 1029.2,466.2 1030.6,466.9 1032.3,467.4 1048.3,471.0 1050.2,471.3 1052.2,471.4 1054.1,471.2 1055.9,470.9 1057.5,470.4 1058.8,469.7 1059.8,468.9 1060.3,468.0 1060.4,467.1 1060.1,466.2 1059.3,465.3 1058.2,464.5 1056.8,463.8 1055.1,463.4 1039.2,459.9" fill="none" stroke="#cd5656" stroke-width="1.5" stroke-linejoin="round" /><polyline points="1045.5,466.8 1043.7,466.5 1041.7,466.4 1039.8,466.5 1037.9,466.9 1036.3,467.4 1035.0,468.1 1034.0,468.9 1033.4,469.8 1033.3,470.7 1033.6,471.7 1034.3,472.6 1035.4,473.4 1036.9,474.1 1038.6,474.6 1055.0,478.2 1056.9,478.6 1058.9,478.7 1060.9,478.5 1062.7,478.2 1064.4,477.7 1065.7,477.0 1066.7,476.1 1067.2,475.2 1067.3,474.3 1067.0,473.3 1066.2,472.4 1065.0,471.6 1063.5,470.9 1061.8,470.4 1045.5,466.8" fill="none" stroke="#cd5656" stroke-width="1.5" stroke-linejoin="round" /><polyline points="1045.6,471.8 1043.7,471.5 1041.8,471.4 1039.9,471.5 1038.0,471.9 1036.4,472.4 1035.1,473.1 1034.1,473.9 1033.5,474.8 1033.4,475.8 1033.7,476.7 1034.4,477.6 1035.5,478.4 1037.0,479.1 1038.7,479.6 1055.1,483.3 1057.0,483.6 1059.0,483.7 1061.0,483.6 1062.8,483.3 1064.4,482.8 1065.7,482.1 1066.7,481.2 1067.2,480.3 1067.3,479.3 1067.0,478.4 1066.2,477.4 1065.1,476.6 1063.6,476.0 1061.9,475.5 1045.6,471.8" fill="none" stroke="#cd5656" stroke-width="1.5" stroke-linejoin="round" /><polyline points="1142.7,556.4 1140.5,556.0 1138.3,555.9 1136.1,556.0 1134.1,556.4 1132.3,557.1 1130.9,557.9 1129.9,559.0 1129.4,560.1 1129.4,561.3 1129.9,562.6 1130.8,563.7 1132.2,564.8 1134.0,565.6 1136.0,566.3 1155.3,571.1 1157.5,571.5 1159.8,571.6 1162.1,571.5 1164.1,571.0 1165.9,570.4 1167.3,569.5 1168.2,568.4 1168.7,567.2 1168.6,566.0 1168.1,564.8 1167.1,563.6 1165.6,562.5 1163.8,561.7 1161.8,561.0 1142.7,556.4" fill="none" stroke="#cd5656" stroke-width="1.5" stroke-linejoin="round" /><polyline points="1142.6,561.9 1140.4,561.5 1138.2,561.4 1136.0,561.5 1134.0,561.9 1132.2,562.6 1130.8,563.4 1129.8,564.5 1129.3,565.6 1129.3,566.9 1129.8,568.1 1130.7,569.3 1132.1,570.3 1133.9,571.2 1135.9,571.8 1155.2,576.7 1157.4,577.1 1159.7,577.2 1161.9,577.1 1164.0,576.6 1165.7,575.9 1167.1,575.0 1168.1,574.0 1168.5,572.8 1168.5,571.5 1167.9,570.3 1166.9,569.1 1165.5,568.1 1163.7,567.2 1161.6,566.6 1142.6,561.9" fill="none" stroke="#cd5656" stroke-width="1.5" stroke-linejoin="round" /><polyline points="1139.2,574.4 1136.9,574.0 1134.6,573.8 1132.4,574.0 1130.3,574.4 1128.5,575.1 1127.1,576.0 1126.1,577.1 1125.5,578.3 1125.5,579.6 1126.0,580.9 1127.0,582.1 1128.4,583.2 1130.2,584.1 1132.3,584.8 1152.0,589.8 1154.3,590.2 1156.6,590.4 1158.9,590.2 1161.0,589.8 1162.8,589.1 1164.3,588.1 1165.2,587.0 1165.7,585.8 1165.7,584.5 1165.1,583.2 1164.1,582.0 1162.6,580.9 1160.7,580.0 1158.6,579.3 1139.2,574.4" fill="none" stroke="#cd5656" stroke-width="1.5" stroke-linejoin="round" /><polyline points="1139.1,580.0 1136.8,579.6 1134.5,579.4 1132.3,579.6 1130.2,580.0 1128.4,580.7 1127.0,581.6 1126.0,582.7 1125.5,583.9 1125.4,585.2 1125.9,586.5 1126.9,587.7 1128.3,588.8 1130.1,589.7 1132.2,590.4 1151.9,595.5 1154.2,595.9 1156.5,596.0 1158.8,595.9 1160.9,595.4 1162.7,594.7 1164.1,593.8 1165.1,592.7 1165.6,591.4 1165.5,590.1 1165.0,588.8 1163.9,587.6 1162.4,586.5 1160.6,585.6 1158.5,584.9 1139.1,580.0" fill="none" stroke="#cd5656" stroke-width="1.5" stroke-linejoin="round" /><polyline points="966.7,530.9 964.7,530.5 962.6,530.4 960.4,530.5 958.4,530.9 956.6,531.5 955.1,532.3 953.9,533.3 953.2,534.4 952.9,535.5 953.1,536.6 953.8,537.7 954.9,538.7 956.4,539.5 958.2,540.1 975.6,544.5 977.6,544.9 979.8,545.0 982.0,544.9 984.0,544.5 985.9,543.9 987.4,543.0 988.5,542.0 989.2,540.9 989.4,539.8 989.2,538.6 988.5,537.6 987.3,536.6 985.8,535.8 983.9,535.2 966.7,530.9" fill="none" stroke="#cd5656" stroke-width="1.5" stroke-linejoin="round" /><polyline points="966.9,536.2 964.9,535.8 962.8,535.7 960.7,535.9 958.7,536.2 956.9,536.9 955.3,537.7 954.2,538.6 953.4,539.7 953.1,540.9 953.3,542.0 954.0,543.1 955.1,544.1 956.6,544.9 958.4,545.5 975.8,549.9 977.9,550.3 980.0,550.5 982.2,550.3 984.2,549.9 986.1,549.3 987.6,548.4 988.7,547.5 989.4,546.3 989.6,545.2 989.4,544.0 988.7,542.9 987.5,542.0 986.0,541.2 984.1,540.6 966.9,536.2" fill="none" stroke="#cd5656" stroke-width="1.5" stroke-linejoin="round" /><polyline points="1196.2,488.7 1194.2,488.4 1192.1,488.3 1190.1,488.4 1188.3,488.8 1186.7,489.3 1185.5,490.1 1184.6,490.9 1184.2,491.9 1184.3,492.9 1184.8,493.9 1185.8,494.9 1187.1,495.8 1188.8,496.5 1190.7,497.0 1208.6,501.0 1210.7,501.3 1212.8,501.4 1214.8,501.3 1216.7,500.9 1218.3,500.4 1219.5,499.6 1220.3,498.7 1220.7,497.7 1220.5,496.7 1220.0,495.7 1219.0,494.7 1217.6,493.9 1215.9,493.1 1213.9,492.6 1196.2,488.7" fill="none" stroke="#cd5656" stroke-width="1.5" stroke-linejoin="round" /><polyline points="1196.0,493.9 1194.0,493.6 1191.9,493.5 1189.9,493.6 1188.1,493.9 1186.5,494.5 1185.3,495.2 1184.5,496.1 1184.1,497.1 1184.1,498.1 1184.6,499.1 1185.6,500.1 1187.0,501.0 1188.6,501.7 1190.5,502.2 1208.4,506.2 1210.5,506.5 1212.6,506.7 1214.6,506.5 1216.5,506.2 1218.0,505.6 1219.3,504.8 1220.1,504.0 1220.4,503.0 1220.3,501.9 1219.7,500.9 1218.7,499.9 1217.3,499.0 1215.6,498.3 1213.7,497.8 1196.0,493.9" fill="none" stroke="#cd5656" stroke-width="1.5" stroke-linejoin="round" /><polyline points="1181.9,501.1 1179.8,500.7 1177.7,500.6 1175.7,500.7 1173.8,501.1 1172.2,501.7 1171.0,502.4 1170.1,503.3 1169.7,504.3 1169.7,505.4 1170.2,506.4 1171.2,507.4 1172.5,508.3 1174.2,509.1 1176.2,509.6 1194.3,513.7 1196.4,514.1 1198.5,514.2 1200.6,514.1 1202.5,513.7 1204.1,513.1 1205.4,512.3 1206.2,511.4 1206.6,510.4 1206.5,509.3 1205.9,508.3 1204.9,507.3 1203.5,506.4 1201.8,505.6 1199.9,505.1 1181.9,501.1" fill="none" stroke="#cd5656" stroke-width="1.5" stroke-linejoin="round" /><polyline points="1181.7,506.3 1179.7,505.9 1177.6,505.8 1175.6,506.0 1173.7,506.3 1172.1,506.9 1170.8,507.6 1169.9,508.5 1169.5,509.6 1169.6,510.6 1170.1,511.7 1171.0,512.7 1172.4,513.6 1174.1,514.3 1176.0,514.9 1194.1,519.0 1196.2,519.4 1198.3,519.5 1200.4,519.4 1202.3,519.0 1203.9,518.4 1205.2,517.6 1206.0,516.7 1206.4,515.7 1206.3,514.6 1205.7,513.5 1204.7,512.5 1203.3,511.6 1201.6,510.9 1199.7,510.3 1181.7,506.3" fill="none" stroke="#cd5656" stroke-width="1.5" stroke-linejoin="round" /><polyline points="1083.3,491.5 1078.2,490.6 1072.9,489.9 1067.6,489.6 1062.3,489.7 1057.1,490.1 1052.0,490.8 1047.2,491.9 1042.8,493.3 1038.7,495.0 1035.1,496.9 1032.1,499.1 1029.6,501.5 1027.7,504.0 1026.6,506.7 1026.1,509.5 1026.3,512.3 1027.3,515.1 1029.0,517.8 1031.3,520.4 1034.3,522.9 1037.9,525.2 1042.1,527.2 1046.7,528.9 1051.7,530.4 1116.9,546.2 1122.4,547.4 1128.2,548.1 1134.0,548.5 1139.7,548.4 1145.4,548.0 1150.7,547.1 1155.8,545.9 1160.4,544.3 1164.4,542.4 1167.9,540.2 1170.7,537.8 1172.9,535.1 1174.3,532.3 1174.9,529.4 1174.8,526.5 1174.0,523.6 1172.5,520.7 1170.3,517.9 1167.4,515.3 1164.0,512.9 1160.0,510.7 1155.6,508.7 1150.8,507.1 1145.8,505.7 1083.3,491.5" fill="none" stroke="#cd5656" stroke-width="1.5" stroke-linejoin="round" /><polyline points="1083.3,496.7 1078.2,495.7 1073.0,495.1 1067.7,494.8 1062.4,494.8 1057.1,495.2 1052.1,496.0 1047.3,497.1 1042.9,498.4 1038.8,500.1 1035.2,502.1 1032.2,504.3 1029.7,506.7 1027.9,509.2 1026.7,511.9 1026.2,514.7 1026.5,517.5 1027.4,520.3 1029.1,523.1 1031.4,525.7 1034.4,528.2 1038.0,530.5 1042.2,532.5 1046.8,534.3 1051.8,535.7 1116.8,551.7 1122.4,552.8 1128.1,553.6 1133.9,553.9 1139.6,553.9 1145.3,553.4 1150.6,552.6 1155.6,551.3 1160.2,549.7 1164.3,547.8 1167.8,545.6 1170.6,543.2 1172.7,540.5 1174.1,537.7 1174.8,534.8 1174.7,531.9 1173.9,528.9 1172.3,526.0 1170.1,523.3 1167.3,520.6 1163.8,518.2 1159.9,516.0 1155.5,514.0 1150.7,512.3 1145.7,511.0 1083.3,496.7" fill="none" stroke="#cd5656" stroke-width="1.5" stroke-linejoin="round" /><line x1="633.7" y1="536.0" x2="688.6" y2="531.4" stroke="#1a3232" stroke-width="2.0" /><line x1="633.7" y1="536.0" x2="688.6" y2="531.4" stroke="#5f9c9c" stroke-width="1.1" stroke-dasharray="1 6"/><line x1="688.6" y1="531.4" x2="741.2" y2="493.7" stroke="#1a3232" stroke-width="2.0" /><line x1="688.6" y1="531.4" x2="741.2" y2="493.7" stroke="#5f9c9c" stroke-width="1.1" stroke-dasharray="1 6"/><line x1="741.2" y1="493.7" x2="793.0" y2="447.0" stroke="#1a3232" stroke-width="2.0" /><line x1="741.2" y1="493.7" x2="793.0" y2="447.0" stroke="#5f9c9c" stroke-width="1.1" stroke-dasharray="1 6"/><line x1="633.7" y1="536.0" x2="793.0" y2="447.0" stroke="#1a3232" stroke-width="2.0" /><line x1="633.7" y1="536.0" x2="793.0" y2="447.0" stroke="#5f9c9c" stroke-width="1.1" stroke-dasharray="1 6"/><line x1="793.0" y1="447.0" x2="928.3" y2="347.5" stroke="#1a3232" stroke-width="2.0" /><line x1="793.0" y1="447.0" x2="928.3" y2="347.5" stroke="#5f9c9c" stroke-width="1.1" stroke-dasharray="1 6"/><line x1="793.0" y1="447.0" x2="955.8" y2="325.0" stroke="#1a3232" stroke-width="2.0" /><line x1="793.0" y1="447.0" x2="955.8" y2="325.0" stroke="#5f9c9c" stroke-width="1.1" stroke-dasharray="1 6"/><line x1="928.3" y1="347.5" x2="955.8" y2="325.0" stroke="#1a3232" stroke-width="2.0" /><line x1="928.3" y1="347.5" x2="955.8" y2="325.0" stroke="#5f9c9c" stroke-width="1.1" stroke-dasharray="1 6"/><line x1="741.2" y1="493.7" x2="1054.2" y2="333.3" stroke="#1a3232" stroke-width="2.0" /><line x1="741.2" y1="493.7" x2="1054.2" y2="333.3" stroke="#5f9c9c" stroke-width="1.1" stroke-dasharray="1 6"/><line x1="798.3" y1="568.0" x2="1054.2" y2="333.3" stroke="#1a3232" stroke-width="2.0" /><line x1="798.3" y1="568.0" x2="1054.2" y2="333.3" stroke="#5f9c9c" stroke-width="1.1" stroke-dasharray="1 6"/><line x1="793.0" y1="447.0" x2="932.0" y2="594.3" stroke="#1a3232" stroke-width="2.0" /><line x1="793.0" y1="447.0" x2="932.0" y2="594.3" stroke="#5f9c9c" stroke-width="1.1" stroke-dasharray="1 6"/><line x1="932.0" y1="594.3" x2="1148.3" y2="357.5" stroke="#1a3232" stroke-width="2.0" /><line x1="932.0" y1="594.3" x2="1148.3" y2="357.5" stroke="#5f9c9c" stroke-width="1.1" stroke-dasharray="1 6"/><line x1="1148.3" y1="357.5" x2="1113.3" y2="388.3" stroke="#1a3232" stroke-width="2.0" /><line x1="1148.3" y1="357.5" x2="1113.3" y2="388.3" stroke="#5f9c9c" stroke-width="1.1" stroke-dasharray="1 6"/><line x1="1113.3" y1="388.3" x2="1093.3" y2="412.5" stroke="#1a3232" stroke-width="2.0" /><line x1="1113.3" y1="388.3" x2="1093.3" y2="412.5" stroke="#5f9c9c" stroke-width="1.1" stroke-dasharray="1 6"/><line x1="1093.3" y1="412.5" x2="1003.2" y2="506.9" stroke="#1a3232" stroke-width="2.0" /><line x1="1093.3" y1="412.5" x2="1003.2" y2="506.9" stroke="#5f9c9c" stroke-width="1.1" stroke-dasharray="1 6"/><line x1="1003.2" y1="506.9" x2="980.9" y2="471.9" stroke="#1a3232" stroke-width="2.0" /><line x1="1003.2" y1="506.9" x2="980.9" y2="471.9" stroke="#5f9c9c" stroke-width="1.1" stroke-dasharray="1 6"/><line x1="980.9" y1="471.9" x2="1028.3" y2="409.2" stroke="#1a3232" stroke-width="2.0" /><line x1="980.9" y1="471.9" x2="1028.3" y2="409.2" stroke="#5f9c9c" stroke-width="1.1" stroke-dasharray="1 6"/><line x1="1028.3" y1="409.2" x2="1189.5" y2="441.0" stroke="#1a3232" stroke-width="2.0" /><line x1="1028.3" y1="409.2" x2="1189.5" y2="441.0" stroke="#5f9c9c" stroke-width="1.1" stroke-dasharray="1 6"/><line x1="1189.5" y1="441.0" x2="1129.0" y2="523.5" stroke="#1a3232" stroke-width="2.0" /><line x1="1189.5" y1="441.0" x2="1129.0" y2="523.5" stroke="#5f9c9c" stroke-width="1.1" stroke-dasharray="1 6"/><line x1="1129.0" y1="523.5" x2="952.4" y2="483.3" stroke="#1a3232" stroke-width="2.0" /><line x1="1129.0" y1="523.5" x2="952.4" y2="483.3" stroke="#5f9c9c" stroke-width="1.1" stroke-dasharray="1 6"/><line x1="952.4" y1="483.3" x2="1172.5" y2="451.7" stroke="#1a3232" stroke-width="2.0" /><line x1="952.4" y1="483.3" x2="1172.5" y2="451.7" stroke="#5f9c9c" stroke-width="1.1" stroke-dasharray="1 6"/><line x1="1172.5" y1="451.7" x2="1284.0" y2="450.7" stroke="#1a3232" stroke-width="2.0" /><line x1="1172.5" y1="451.7" x2="1284.0" y2="450.7" stroke="#5f9c9c" stroke-width="1.1" stroke-dasharray="1 6"/><line x1="1284.0" y1="450.7" x2="1218.6" y2="556.4" stroke="#1a3232" stroke-width="2.0" /><line x1="1284.0" y1="450.7" x2="1218.6" y2="556.4" stroke="#5f9c9c" stroke-width="1.1" stroke-dasharray="1 6"/><line x1="1218.6" y1="556.4" x2="1272.0" y2="550.7" stroke="#1a3232" stroke-width="2.0" /><line x1="1218.6" y1="556.4" x2="1272.0" y2="550.7" stroke="#5f9c9c" stroke-width="1.1" stroke-dasharray="1 6"/><line x1="1272.0" y1="550.7" x2="1188.9" y2="531.6" stroke="#1a3232" stroke-width="2.0" /><line x1="1272.0" y1="550.7" x2="1188.9" y2="531.6" stroke="#5f9c9c" stroke-width="1.1" stroke-dasharray="1 6"/><line x1="1188.9" y1="531.6" x2="961.8" y2="544.0" stroke="#1a3232" stroke-width="2.0" /><line x1="1188.9" y1="531.6" x2="961.8" y2="544.0" stroke="#5f9c9c" stroke-width="1.1" stroke-dasharray="1 6"/><line x1="961.8" y1="544.0" x2="798.3" y2="568.0" stroke="#1a3232" stroke-width="2.0" /><line x1="961.8" y1="544.0" x2="798.3" y2="568.0" stroke="#5f9c9c" stroke-width="1.1" stroke-dasharray="1 6"/><line x1="633.7" y1="536.0" x2="640.6" y2="579.1" stroke="#1a3232" stroke-width="2.0" /><line x1="633.7" y1="536.0" x2="640.6" y2="579.1" stroke="#5f9c9c" stroke-width="1.1" stroke-dasharray="1 6"/><line x1="640.6" y1="579.1" x2="643.0" y2="594.3" stroke="#cd5656" stroke-width="1.8" /><rect x="633.2" y="535.5" width="1.2" height="1.2" fill="#c8c830"/><line x1="688.6" y1="531.4" x2="694.6" y2="574.4" stroke="#1a3232" stroke-width="2.0" /><line x1="688.6" y1="531.4" x2="694.6" y2="574.4" stroke="#5f9c9c" stroke-width="1.1" stroke-dasharray="1 6"/><line x1="694.6" y1="574.4" x2="696.8" y2="589.5" stroke="#cd5656" stroke-width="1.8" /><rect x="688.1" y="530.9" width="1.2" height="1.2" fill="#c8c830"/><line x1="741.2" y1="493.7" x2="746.2" y2="535.2" stroke="#1a3232" stroke-width="2.0" /><line x1="741.2" y1="493.7" x2="746.2" y2="535.2" stroke="#5f9c9c" stroke-width="1.1" stroke-dasharray="1 6"/><line x1="746.2" y1="535.2" x2="748.0" y2="549.7" stroke="#cd5656" stroke-width="1.8" /><rect x="740.7" y="493.2" width="1.2" height="1.2" fill="#c8c830"/><line x1="793.0" y1="447.0" x2="797.0" y2="486.5" stroke="#1a3232" stroke-width="2.0" /><line x1="793.0" y1="447.0" x2="797.0" y2="486.5" stroke="#5f9c9c" stroke-width="1.1" stroke-dasharray="1 6"/><line x1="797.0" y1="486.5" x2="798.4" y2="500.4" stroke="#cd5656" stroke-width="1.8" /><rect x="792.5" y="446.5" width="1.2" height="1.2" fill="#c8c830"/><line x1="928.3" y1="347.5" x2="930.2" y2="382.4" stroke="#1a3232" stroke-width="2.0" /><line x1="928.3" y1="347.5" x2="930.2" y2="382.4" stroke="#5f9c9c" stroke-width="1.1" stroke-dasharray="1 6"/><line x1="930.2" y1="382.4" x2="930.8" y2="394.8" stroke="#cd5656" stroke-width="1.8" /><rect x="927.8" y="347.0" width="1.2" height="1.2" fill="#c8c830"/><line x1="955.8" y1="325.0" x2="957.3" y2="358.9" stroke="#1a3232" stroke-width="2.0" /><line x1="955.8" y1="325.0" x2="957.3" y2="358.9" stroke="#5f9c9c" stroke-width="1.1" stroke-dasharray="1 6"/><line x1="957.3" y1="358.9" x2="957.8" y2="370.8" stroke="#cd5656" stroke-width="1.8" /><rect x="955.3" y="324.5" width="1.2" height="1.2" fill="#c8c830"/><line x1="1054.2" y1="333.3" x2="1054.6" y2="367.7" stroke="#1a3232" stroke-width="2.0" /><line x1="1054.2" y1="333.3" x2="1054.6" y2="367.7" stroke="#5f9c9c" stroke-width="1.1" stroke-dasharray="1 6"/><line x1="1054.6" y1="367.7" x2="1054.8" y2="379.9" stroke="#cd5656" stroke-width="1.8" /><rect x="1053.7" y="332.8" width="1.2" height="1.2" fill="#c8c830"/><line x1="1148.3" y1="357.5" x2="1147.6" y2="393.2" stroke="#1a3232" stroke-width="2.0" /><line x1="1148.3" y1="357.5" x2="1147.6" y2="393.2" stroke="#5f9c9c" stroke-width="1.1" stroke-dasharray="1 6"/><line x1="1147.6" y1="393.2" x2="1147.4" y2="405.8" stroke="#cd5656" stroke-width="1.8" /><rect x="1147.8" y="357.0" width="1.2" height="1.2" fill="#c8c830"/><line x1="1028.3" y1="409.2" x2="1029.1" y2="447.2" stroke="#1a3232" stroke-width="2.0" /><line x1="1028.3" y1="409.2" x2="1029.1" y2="447.2" stroke="#5f9c9c" stroke-width="1.1" stroke-dasharray="1 6"/><line x1="1029.1" y1="447.2" x2="1029.4" y2="460.6" stroke="#cd5656" stroke-width="1.8" /><rect x="1027.8" y="408.7" width="1.2" height="1.2" fill="#c8c830"/><line x1="1093.3" y1="412.5" x2="1093.3" y2="450.8" stroke="#1a3232" stroke-width="2.0" /><line x1="1093.3" y1="412.5" x2="1093.3" y2="450.8" stroke="#5f9c9c" stroke-width="1.1" stroke-dasharray="1 6"/><line x1="1093.3" y1="450.8" x2="1093.3" y2="464.3" stroke="#cd5656" stroke-width="1.8" /><rect x="1092.8" y="412.0" width="1.2" height="1.2" fill="#c8c830"/><line x1="1113.3" y1="388.3" x2="1113.0" y2="425.5" stroke="#1a3232" stroke-width="2.0" /><line x1="1113.3" y1="388.3" x2="1113.0" y2="425.5" stroke="#5f9c9c" stroke-width="1.1" stroke-dasharray="1 6"/><line x1="1113.0" y1="425.5" x2="1112.9" y2="438.6" stroke="#cd5656" stroke-width="1.8" /><rect x="1112.8" y="387.8" width="1.2" height="1.2" fill="#c8c830"/><line x1="1189.5" y1="441.0" x2="1188.2" y2="480.7" stroke="#1a3232" stroke-width="2.0" /><line x1="1189.5" y1="441.0" x2="1188.2" y2="480.7" stroke="#5f9c9c" stroke-width="1.1" stroke-dasharray="1 6"/><line x1="1188.2" y1="480.7" x2="1187.7" y2="494.7" stroke="#cd5656" stroke-width="1.8" /><rect x="1189.0" y="440.5" width="1.2" height="1.2" fill="#c8c830"/><line x1="1172.5" y1="451.7" x2="1171.4" y2="491.9" stroke="#1a3232" stroke-width="2.0" /><line x1="1172.5" y1="451.7" x2="1171.4" y2="491.9" stroke="#5f9c9c" stroke-width="1.1" stroke-dasharray="1 6"/><line x1="1171.4" y1="491.9" x2="1171.0" y2="506.0" stroke="#cd5656" stroke-width="1.8" /><rect x="1172.0" y="451.2" width="1.2" height="1.2" fill="#c8c830"/><line x1="980.9" y1="471.9" x2="982.4" y2="512.7" stroke="#1a3232" stroke-width="2.0" /><line x1="980.9" y1="471.9" x2="982.4" y2="512.7" stroke="#5f9c9c" stroke-width="1.1" stroke-dasharray="1 6"/><line x1="982.4" y1="512.7" x2="983.0" y2="527.1" stroke="#cd5656" stroke-width="1.8" /><rect x="980.4" y="471.4" width="1.2" height="1.2" fill="#c8c830"/><line x1="952.4" y1="483.3" x2="954.4" y2="524.6" stroke="#1a3232" stroke-width="2.0" /><line x1="952.4" y1="483.3" x2="954.4" y2="524.6" stroke="#5f9c9c" stroke-width="1.1" stroke-dasharray="1 6"/><line x1="954.4" y1="524.6" x2="955.1" y2="539.1" stroke="#cd5656" stroke-width="1.8" /><rect x="951.9" y="482.8" width="1.2" height="1.2" fill="#c8c830"/><line x1="1003.2" y1="506.9" x2="1004.5" y2="549.3" stroke="#1a3232" stroke-width="2.0" /><line x1="1003.2" y1="506.9" x2="1004.5" y2="549.3" stroke="#5f9c9c" stroke-width="1.1" stroke-dasharray="1 6"/><line x1="1004.5" y1="549.3" x2="1005.0" y2="564.2" stroke="#cd5656" stroke-width="1.8" /><rect x="1002.7" y="506.4" width="1.2" height="1.2" fill="#c8c830"/><line x1="1129.0" y1="523.5" x2="1128.4" y2="566.7" stroke="#1a3232" stroke-width="2.0" /><line x1="1129.0" y1="523.5" x2="1128.4" y2="566.7" stroke="#5f9c9c" stroke-width="1.1" stroke-dasharray="1 6"/><line x1="1128.4" y1="566.7" x2="1128.2" y2="581.9" stroke="#cd5656" stroke-width="1.8" /><rect x="1128.5" y="523.0" width="1.2" height="1.2" fill="#c8c830"/><line x1="1188.9" y1="531.6" x2="1187.4" y2="575.3" stroke="#1a3232" stroke-width="2.0" /><line x1="1188.9" y1="531.6" x2="1187.4" y2="575.3" stroke="#5f9c9c" stroke-width="1.1" stroke-dasharray="1 6"/><line x1="1187.4" y1="575.3" x2="1186.9" y2="590.6" stroke="#cd5656" stroke-width="1.8" /><rect x="1188.4" y="531.1" width="1.2" height="1.2" fill="#c8c830"/><line x1="1218.6" y1="556.4" x2="1216.6" y2="601.1" stroke="#1a3232" stroke-width="2.0" /><line x1="1218.6" y1="556.4" x2="1216.6" y2="601.1" stroke="#5f9c9c" stroke-width="1.1" stroke-dasharray="1 6"/><line x1="1216.6" y1="601.1" x2="1215.9" y2="616.8" stroke="#cd5656" stroke-width="1.8" /><rect x="1218.1" y="555.9" width="1.2" height="1.2" fill="#c8c830"/><line x1="798.3" y1="568.0" x2="802.9" y2="612.6" stroke="#1a3232" stroke-width="2.0" /><line x1="798.3" y1="568.0" x2="802.9" y2="612.6" stroke="#5f9c9c" stroke-width="1.1" stroke-dasharray="1 6"/><line x1="802.9" y1="612.6" x2="804.6" y2="628.3" stroke="#cd5656" stroke-width="1.8" /><rect x="797.8" y="567.5" width="1.2" height="1.2" fill="#c8c830"/><line x1="932.0" y1="594.3" x2="934.6" y2="640.2" stroke="#1a3232" stroke-width="2.0" /><line x1="932.0" y1="594.3" x2="934.6" y2="640.2" stroke="#5f9c9c" stroke-width="1.1" stroke-dasharray="1 6"/><line x1="934.6" y1="640.2" x2="935.5" y2="656.2" stroke="#cd5656" stroke-width="1.8" /><rect x="931.5" y="593.8" width="1.2" height="1.2" fill="#c8c830"/><line x1="961.8" y1="544.0" x2="963.8" y2="587.9" stroke="#1a3232" stroke-width="2.0" /><line x1="961.8" y1="544.0" x2="963.8" y2="587.9" stroke="#5f9c9c" stroke-width="1.1" stroke-dasharray="1 6"/><line x1="963.8" y1="587.9" x2="964.5" y2="603.3" stroke="#cd5656" stroke-width="1.8" /><rect x="961.3" y="543.5" width="1.2" height="1.2" fill="#c8c830"/><line x1="1284.0" y1="450.7" x2="1281.4" y2="491.0" stroke="#1a3232" stroke-width="2.0" /><line x1="1284.0" y1="450.7" x2="1281.4" y2="491.0" stroke="#5f9c9c" stroke-width="1.1" stroke-dasharray="1 6"/><line x1="1281.4" y1="491.0" x2="1280.5" y2="505.2" stroke="#cd5656" stroke-width="1.8" /><rect x="1283.5" y="450.2" width="1.2" height="1.2" fill="#c8c830"/><line x1="1272.0" y1="550.7" x2="1269.2" y2="595.3" stroke="#1a3232" stroke-width="2.0" /><line x1="1272.0" y1="550.7" x2="1269.2" y2="595.3" stroke="#5f9c9c" stroke-width="1.1" stroke-dasharray="1 6"/><line x1="1269.2" y1="595.3" x2="1268.2" y2="610.9" stroke="#cd5656" stroke-width="1.8" /><rect x="1271.5" y="550.2" width="1.2" height="1.2" fill="#c8c830"/><line x1="627.4" y1="498.7" x2="640.6" y2="580.6" stroke="#3a3aff" stroke-width="1.2" /><polyline points="616.7,458.7 627.4,461.3 619.4,478.7 630.0,481.3" fill="none" stroke="#3a3aff" stroke-width="1.2" stroke-linejoin="round" /><line x1="641.7" y1="589.7" x2="703.4" y2="539.4" stroke="#ff2a2a" stroke-width="1" /><polyline points="720.6,520.0 720.6,526.9 732.0,522.3" fill="none" stroke="#ff2a2a" stroke-width="1" stroke-linejoin="round" /><line x1="673.7" y1="598.9" x2="729.7" y2="614.9" stroke="#22dd22" stroke-width="1.2" /><line x1="736.6" y1="625.2" x2="759.5" y2="617.2" stroke="#22dd22" stroke-width="1.2" /><line x1="746.9" y1="614.9" x2="748.0" y2="628.6" stroke="#22dd22" stroke-width="1.2" /><polyline points="641.7,589.7 673.7,598.9 713.7,564.6 709.2,531.4" fill="none" stroke="#ffff00" stroke-width="2.6" stroke-linejoin="round" /></svg>
<div style="left:331px;position:absolute;top:148.50px;font-family:'Liberation Mono', monospace;font-size:15px;line-height:15px;color:#fff;font-weight:700;white-space:pre;letter-spacing:0px;">  X:</div>
<div style="left:367px;position:absolute;top:148.50px;font-family:'Liberation Mono', monospace;font-size:15px;line-height:15px;color:#f4f4f4;font-weight:400;white-space:pre;letter-spacing:0px;-webkit-text-stroke:0.35px #f4f4f4">    0.000</div>
<svg style="position:absolute;left:449px;top:145px;" width="17" height="18" viewBox="0 0 17 18"><circle cx="8.5" cy="9" r="5.4" fill="#fff"/><path d="M8.5 1 V17 M1.5 9 H15.5" stroke="#fff" stroke-width="1.2"/><path d="M8.5 4 V14 M3.5 9 H13.5" stroke="#000" stroke-width="1"/></svg>
<div style="left:331px;position:absolute;top:166.50px;font-family:'Liberation Mono', monospace;font-size:15px;line-height:15px;color:#fff;font-weight:700;white-space:pre;letter-spacing:0px;">  Y:</div>
<div style="left:367px;position:absolute;top:166.50px;font-family:'Liberation Mono', monospace;font-size:15px;line-height:15px;color:#f4f4f4;font-weight:400;white-space:pre;letter-spacing:0px;-webkit-text-stroke:0.35px #f4f4f4">    0.000</div>
<svg style="position:absolute;left:449px;top:163px;" width="17" height="18" viewBox="0 0 17 18"><circle cx="8.5" cy="9" r="5.4" fill="#fff"/><path d="M8.5 1 V17 M1.5 9 H15.5" stroke="#fff" stroke-width="1.2"/><path d="M8.5 4 V14 M3.5 9 H13.5" stroke="#000" stroke-width="1"/></svg>
<div style="left:331px;position:absolute;top:184.50px;font-family:'Liberation Mono', monospace;font-size:15px;line-height:15px;color:#fff;font-weight:700;white-space:pre;letter-spacing:0px;">  Z:</div>
<div style="left:367px;position:absolute;top:184.50px;font-family:'Liberation Mono', monospace;font-size:15px;line-height:15px;color:#f4f4f4;font-weight:400;white-space:pre;letter-spacing:0px;-webkit-text-stroke:0.35px #f4f4f4">   15.000</div>
<svg style="position:absolute;left:449px;top:181px;" width="17" height="18" viewBox="0 0 17 18"><circle cx="8.5" cy="9" r="5.4" fill="#fff"/><path d="M8.5 1 V17 M1.5 9 H15.5" stroke="#fff" stroke-width="1.2"/><path d="M8.5 4 V14 M3.5 9 H13.5" stroke="#000" stroke-width="1"/></svg>
<div style="left:331px;position:absolute;top:202.50px;font-family:'Liberation Mono', monospace;font-size:15px;line-height:15px;color:#fff;font-weight:700;white-space:pre;letter-spacing:0px;">Vel:</div>
<div style="left:367px;position:absolute;top:202.50px;font-family:'Liberation Mono', monospace;font-size:15px;line-height:15px;color:#f4f4f4;font-weight:400;white-space:pre;letter-spacing:0px;-webkit-text-stroke:0.35px #f4f4f4">    0.000</div>
</body></html>
